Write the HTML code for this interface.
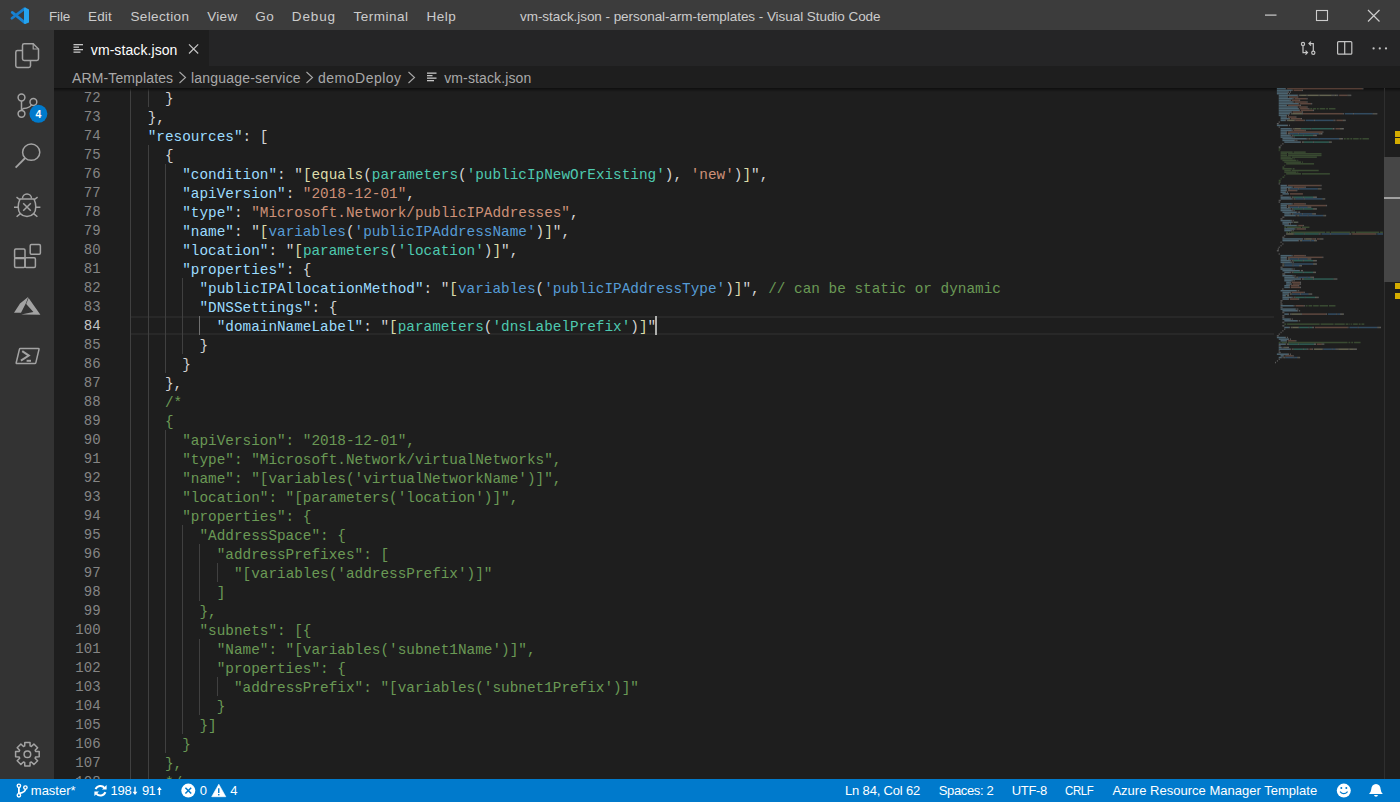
<!DOCTYPE html>
<html><head><meta charset="utf-8">
<style>
*{margin:0;padding:0;box-sizing:border-box}
html,body{width:1400px;height:802px;overflow:hidden;background:#1e1e1e;font-family:"Liberation Sans",sans-serif}
.abs{position:absolute}
#title{position:absolute;left:0;top:0;width:1400px;height:30px;background:#3c3c3c}
.mi{position:absolute;top:7px;font-size:13.5px;color:#cccccc;white-space:nowrap;line-height:16px}
#act{position:absolute;left:0;top:30px;width:54px;height:749px;background:#333333}
#tabs{position:absolute;left:54px;top:30px;width:1346px;height:36px;background:#252526}
#tab{position:absolute;left:0;top:0;width:155px;height:36px;background:#1e1e1e}
#crumbs{position:absolute;left:54px;top:66px;width:1346px;height:22px;background:#1e1e1e}
.bc{position:absolute;top:3px;font-size:14px;color:#a9a9a9;white-space:nowrap;line-height:16px}
#editor{position:absolute;left:54px;top:88px;width:1346px;height:691px;background:#1e1e1e;overflow:hidden}
#status{position:absolute;left:0;top:779px;width:1400px;height:23px;background:#007acc}
.st{position:absolute;top:4px;font-size:13px;color:#ffffff;white-space:nowrap;line-height:16px}
.ln{position:absolute;left:54px;width:47px;text-align:right;padding-right:0;height:19px;line-height:19px;font-family:"Liberation Mono",monospace;font-size:14px;letter-spacing:0.22px;color:#858585}
.ln.cur{color:#c6c6c6}
.ig{position:absolute;width:1px;height:19px;background:#404040}
.ig.ia{background:#707070}
.tx{position:absolute;white-space:pre;line-height:1;z-index:5}
.cl{position:absolute;height:19px;line-height:19px;font-family:"Liberation Mono",monospace;font-size:14.364px;white-space:pre}
#clip{position:absolute;left:0;top:88px;width:1400px;height:691px;overflow:hidden}
</style></head><body>
<!-- TITLE BAR -->
<div id="title">
  <svg class="abs" style="left:0;top:0" width="40" height="30" viewBox="0 0 40 30">
    <path d="M12.2 12.4 L24.8 22.6" stroke="#1883d3" stroke-width="2.7" stroke-linecap="round"/>
    <path d="M24.6 8.6 L11.9 18.3" stroke="#167dcc" stroke-width="2.7" stroke-linecap="round"/>
    <path d="M24 8.4 L25.2 7.5 L29 9.4 L29 22.4 L25.2 24.1 L24 23.2 Z" fill="#25a4ef"/>
  </svg>
  <svg class="abs" style="left:1250px;top:0" width="150" height="30" viewBox="1250 0 150 30">
    <rect x="1265" y="14.5" width="11.5" height="1.2" fill="#cccccc"/>
    <rect x="1316.5" y="10.5" width="11" height="10" fill="none" stroke="#cccccc" stroke-width="1.1"/>
    <path d="M1368 10 L1379.5 21.5 M1379.5 10 L1368 21.5" stroke="#cccccc" stroke-width="1.2"/>
  </svg>
</div>

<!-- ACTIVITY BAR -->
<div id="act"></div>
<svg class="abs" style="left:0;top:30px" width="54" height="749" viewBox="0 30 54 749">
  <g fill="none" stroke="#a3a3a3" stroke-width="1.5">
    <!-- files -->
    <path d="M22.5 50.5 H17.5 Q15.8 50.5 15.8 52.2 V65.8 Q15.8 67.5 17.5 67.5 H28.8 Q30.5 67.5 30.5 65.8 V61"/>
    <path d="M24.2 43.8 H33.2 L38.5 49 V58.8 Q38.5 60.5 36.8 60.5 H24.2 Q22.5 60.5 22.5 58.8 V45.5 Q22.5 43.8 24.2 43.8 Z"/>
    <path d="M33.2 43.8 V49 H38.5" stroke-width="1.2"/>
    <!-- scm -->
    <circle cx="21.5" cy="97.5" r="3.4"/>
    <circle cx="33.4" cy="102" r="3.4"/>
    <circle cx="21.5" cy="113.8" r="3.4"/>
    <path d="M21.5 101 V110.4"/>
    <path d="M31.5 104.8 Q30 108 23.5 108.5 L21.5 110"/>
    <!-- search -->
    <ellipse cx="31.2" cy="152.2" rx="8.6" ry="8.1"/>
    <path d="M25.2 158 L15.6 167.6" stroke-width="1.8"/>
    <!-- debug -->
    <path d="M22.5 198.5 A4.5 4.5 0 0 1 31.5 198.5"/>
    <path d="M20 199 Q18.2 203 18.2 206.8 Q18.2 216 27 216.6 Q35.8 216 35.8 206.8 Q35.8 203 34 199 Z"/>
    <path d="M23.2 203.2 L30.8 210.8 M30.8 203.2 L23.2 210.8"/>
    <path d="M14 207.2 H18.2 M35.8 207.2 H40.4 M16.5 197.2 L20.2 200 M37.6 197.2 L33.8 200 M16.6 216.8 L20.4 213.6 M37.4 216.8 L33.6 213.6"/>
    <!-- extensions -->
    <rect x="14.6" y="249" width="10.4" height="9.4" rx="1.2"/>
    <rect x="14.6" y="257.8" width="10.4" height="9.6" rx="1.2"/>
    <rect x="25" y="257.8" width="10.4" height="9.6" rx="1.2"/>
    <rect x="30.2" y="244.6" width="10.2" height="9.6" rx="1.2"/>
    <!-- powershell -->
    <path d="M20.4 348.6 H38.4 Q39.2 348.6 39 349.4 L35.8 362.8 Q35.6 363.6 34.8 363.6 H16.8 Q16 363.6 16.2 362.8 L19.4 349.4 Q19.6 348.6 20.4 348.6 Z" stroke-width="1.5"/>
    <path d="M22.2 351.2 L28.8 355.6 L20.9 360.6" stroke-width="2"/>
    <path d="M26.6 360.8 H31" stroke-width="2"/>
  </g>
  <!-- azure -->
  <path d="M14 312.7 L20 303.4 L28.4 296.7 L26 303 L21 312.7 Z M28.6 298 L40.4 314.7 L21.2 314.4 L33.4 312.1 L26.2 304 Z" fill="#a3a3a3"/>
  <!-- badge -->
  <circle cx="38.4" cy="113.8" r="9" fill="#007acc"/>
  <text x="38.4" y="117.6" font-family="Liberation Sans" font-weight="bold" font-size="10.5" fill="#fff" text-anchor="middle">4</text>
  <!-- gear -->
  <path fill="none" stroke="#a3a3a3" stroke-width="1.5" stroke-linejoin="round" d="M24.71 745.93 L24.78 742.39 L30.02 742.39 L30.09 745.93 L31.35 746.45 L33.90 743.99 L37.61 747.70 L35.15 750.25 L35.67 751.51 L39.21 751.58 L39.21 756.82 L35.67 756.89 L35.15 758.15 L37.61 760.70 L33.90 764.41 L31.35 761.95 L30.09 762.47 L30.02 766.01 L24.78 766.01 L24.71 762.47 L23.45 761.95 L20.90 764.41 L17.19 760.70 L19.65 758.15 L19.13 756.89 L15.59 756.82 L15.59 751.58 L19.13 751.51 L19.65 750.25 L17.19 747.70 L20.90 743.99 L23.45 746.45 Z"/>
  <circle cx="27.4" cy="754.2" r="3.3" fill="none" stroke="#a3a3a3" stroke-width="1.5"/>
</svg>

<!-- TABS -->
<div id="tabs">
  <div id="tab"></div>
  <svg class="abs" style="left:0;top:0" width="160" height="36">
    <g fill="#c5c5c5">
      <rect x="19.5" y="14" width="9.5" height="1.3"/>
      <rect x="19.5" y="16.5" width="5.5" height="1.3"/>
      <rect x="19.5" y="19" width="9.5" height="1.3"/>
      <rect x="19.5" y="21.5" width="7" height="1.3"/>
    </g>
    <path d="M135 14.3 L144.2 23.5 M144.2 14.3 L135 23.5" stroke="#c5c5c5" stroke-width="1.2"/>
  </svg>
  <svg class="abs" style="left:1230px;top:0" width="116" height="36" viewBox="1284 30 116 36">
    <g fill="none" stroke="#c5c5c5" stroke-width="1.2">
      <circle cx="1303" cy="43.9" r="1.6"/>
      <circle cx="1313.3" cy="52.7" r="1.6"/>
      <path d="M1303 45.5 V52.6 L1307.4 52.6 M1305.5 50.6 L1307.5 52.6 L1305.5 54.6"/>
      <path d="M1313.3 51.1 V43.6 L1309 43.6 M1311 41.6 L1309 43.6 L1311 45.6"/>
      <rect x="1337.6" y="41.6" width="14.2" height="12.6" rx="1"/>
      <path d="M1344.7 41.6 V54.2"/>
    </g>
    <g fill="#c5c5c5">
      <circle cx="1373.6" cy="48.4" r="1.1"/>
      <circle cx="1379.8" cy="48.4" r="1.1"/>
      <circle cx="1386" cy="48.4" r="1.1"/>
    </g>
  </svg>
</div>

<!-- BREADCRUMBS -->
<div id="crumbs">
  <svg class="abs" style="left:0;top:0" width="400" height="22" viewBox="54 66 400 22">
    <g fill="none" stroke="#a9a9a9" stroke-width="1.1">
      <path d="M179.5 72 L185.5 77.5 L179.5 83"/>
      <path d="M306.5 72 L312.5 77.5 L306.5 83"/>
      <path d="M408.5 72 L414.5 77.5 L408.5 83"/>
    </g>
    <g fill="#c5c5c5">
      <rect x="427" y="72.5" width="9.5" height="1.3"/>
      <rect x="427" y="75" width="5.5" height="1.3"/>
      <rect x="427" y="77.5" width="9.5" height="1.3"/>
      <rect x="427" y="80" width="7" height="1.3"/>
    </g>
  </svg>
</div>

<!-- EDITOR -->
<div id="editor"></div>
<div class="abs" style="left:131px;top:316px;width:1143px;height:19px;border:2px solid #282828;border-left:none;border-right:none"></div>
<div class="ln" style="top:88.5px">72</div>
<div class="ig" style="left:130px;top:88px"></div>
<div class="ig" style="left:148px;top:88px"></div>
<div class="cl" style="top:89.5px;left:164.98px"><span style="color:#d4d4d4">}</span></div>
<div class="ln" style="top:107.5px">73</div>
<div class="ig" style="left:130px;top:107px"></div>
<div class="cl" style="top:108.5px;left:147.74px"><span style="color:#d4d4d4">},</span></div>
<div class="ln" style="top:126.5px">74</div>
<div class="ig" style="left:130px;top:126px"></div>
<div class="cl" style="top:127.5px;left:147.74px"><span style="color:#9cdcfe">"resources"</span><span style="color:#d4d4d4">: </span><span style="color:#d4d4d4">[</span></div>
<div class="ln" style="top:145.5px">75</div>
<div class="ig" style="left:130px;top:145px"></div>
<div class="ig" style="left:148px;top:145px"></div>
<div class="cl" style="top:146.5px;left:164.98px"><span style="color:#d4d4d4">{</span></div>
<div class="ln" style="top:164.5px">76</div>
<div class="ig" style="left:130px;top:164px"></div>
<div class="ig" style="left:148px;top:164px"></div>
<div class="ig" style="left:165px;top:164px"></div>
<div class="cl" style="top:165.5px;left:182.22px"><span style="color:#9cdcfe">"condition"</span><span style="color:#d4d4d4">: </span><span style="color:#d4d4d4">"</span><span style="color:#dcdcaa">[</span><span style="color:#dcdcaa">equals</span><span style="color:#d4d4d4">(</span><span style="color:#4ec9b0">parameters</span><span style="color:#d4d4d4">(</span><span style="color:#4ec9b0">'publicIpNewOrExisting'</span><span style="color:#d4d4d4">), </span><span style="color:#ce9178">'new'</span><span style="color:#d4d4d4">)</span><span style="color:#dcdcaa">]</span><span style="color:#d4d4d4">",</span></div>
<div class="ln" style="top:183.5px">77</div>
<div class="ig" style="left:130px;top:183px"></div>
<div class="ig" style="left:148px;top:183px"></div>
<div class="ig" style="left:165px;top:183px"></div>
<div class="cl" style="top:184.5px;left:182.22px"><span style="color:#9cdcfe">"apiVersion"</span><span style="color:#d4d4d4">: </span><span style="color:#ce9178">"2018-12-01"</span><span style="color:#d4d4d4">,</span></div>
<div class="ln" style="top:202.5px">78</div>
<div class="ig" style="left:130px;top:202px"></div>
<div class="ig" style="left:148px;top:202px"></div>
<div class="ig" style="left:165px;top:202px"></div>
<div class="cl" style="top:203.5px;left:182.22px"><span style="color:#9cdcfe">"type"</span><span style="color:#d4d4d4">: </span><span style="color:#ce9178">"Microsoft.Network/publicIPAddresses"</span><span style="color:#d4d4d4">,</span></div>
<div class="ln" style="top:221.5px">79</div>
<div class="ig" style="left:130px;top:221px"></div>
<div class="ig" style="left:148px;top:221px"></div>
<div class="ig" style="left:165px;top:221px"></div>
<div class="cl" style="top:222.5px;left:182.22px"><span style="color:#9cdcfe">"name"</span><span style="color:#d4d4d4">: </span><span style="color:#d4d4d4">"</span><span style="color:#dcdcaa">[</span><span style="color:#569cd6">variables</span><span style="color:#d4d4d4">(</span><span style="color:#569cd6">'publicIPAddressName'</span><span style="color:#d4d4d4">)</span><span style="color:#dcdcaa">]</span><span style="color:#d4d4d4">",</span></div>
<div class="ln" style="top:240.5px">80</div>
<div class="ig" style="left:130px;top:240px"></div>
<div class="ig" style="left:148px;top:240px"></div>
<div class="ig" style="left:165px;top:240px"></div>
<div class="cl" style="top:241.5px;left:182.22px"><span style="color:#9cdcfe">"location"</span><span style="color:#d4d4d4">: </span><span style="color:#d4d4d4">"</span><span style="color:#dcdcaa">[</span><span style="color:#4ec9b0">parameters</span><span style="color:#d4d4d4">(</span><span style="color:#4ec9b0">'location'</span><span style="color:#d4d4d4">)</span><span style="color:#dcdcaa">]</span><span style="color:#d4d4d4">",</span></div>
<div class="ln" style="top:259.5px">81</div>
<div class="ig" style="left:130px;top:259px"></div>
<div class="ig" style="left:148px;top:259px"></div>
<div class="ig" style="left:165px;top:259px"></div>
<div class="cl" style="top:260.5px;left:182.22px"><span style="color:#9cdcfe">"properties"</span><span style="color:#d4d4d4">: </span><span style="color:#d4d4d4">{</span></div>
<div class="ln" style="top:278.5px">82</div>
<div class="ig" style="left:130px;top:278px"></div>
<div class="ig" style="left:148px;top:278px"></div>
<div class="ig" style="left:165px;top:278px"></div>
<div class="ig" style="left:182px;top:278px"></div>
<div class="cl" style="top:279.5px;left:199.46px"><span style="color:#9cdcfe">"publicIPAllocationMethod"</span><span style="color:#d4d4d4">: </span><span style="color:#d4d4d4">"</span><span style="color:#dcdcaa">[</span><span style="color:#569cd6">variables</span><span style="color:#d4d4d4">(</span><span style="color:#569cd6">'publicIPAddressType'</span><span style="color:#d4d4d4">)</span><span style="color:#dcdcaa">]</span><span style="color:#d4d4d4">",</span><span style="color:#6a9955"> // can be static or dynamic</span></div>
<div class="ln" style="top:297.5px">83</div>
<div class="ig" style="left:130px;top:297px"></div>
<div class="ig" style="left:148px;top:297px"></div>
<div class="ig" style="left:165px;top:297px"></div>
<div class="ig" style="left:182px;top:297px"></div>
<div class="cl" style="top:298.5px;left:199.46px"><span style="color:#9cdcfe">"DNSSettings"</span><span style="color:#d4d4d4">: </span><span style="color:#d4d4d4">{</span></div>
<div class="ln cur" style="top:316.5px">84</div>
<div class="ig" style="left:130px;top:316px"></div>
<div class="ig" style="left:148px;top:316px"></div>
<div class="ig" style="left:165px;top:316px"></div>
<div class="ig" style="left:182px;top:316px"></div>
<div class="ig ia" style="left:199px;top:316px"></div>
<div class="cl" style="top:317.5px;left:216.70px"><span style="color:#9cdcfe">"domainNameLabel"</span><span style="color:#d4d4d4">: </span><span style="color:#d4d4d4">"</span><span style="color:#dcdcaa">[</span><span style="color:#4ec9b0">parameters</span><span style="color:#d4d4d4">(</span><span style="color:#4ec9b0">'dnsLabelPrefix'</span><span style="color:#d4d4d4">)</span><span style="color:#dcdcaa">]</span><span style="color:#d4d4d4">"</span></div>
<div class="ln" style="top:335.5px">85</div>
<div class="ig" style="left:130px;top:335px"></div>
<div class="ig" style="left:148px;top:335px"></div>
<div class="ig" style="left:165px;top:335px"></div>
<div class="ig" style="left:182px;top:335px"></div>
<div class="cl" style="top:336.5px;left:199.46px"><span style="color:#d4d4d4">}</span></div>
<div class="ln" style="top:354.5px">86</div>
<div class="ig" style="left:130px;top:354px"></div>
<div class="ig" style="left:148px;top:354px"></div>
<div class="ig" style="left:165px;top:354px"></div>
<div class="cl" style="top:355.5px;left:182.22px"><span style="color:#d4d4d4">}</span></div>
<div class="ln" style="top:373.5px">87</div>
<div class="ig" style="left:130px;top:373px"></div>
<div class="ig" style="left:148px;top:373px"></div>
<div class="cl" style="top:374.5px;left:164.98px"><span style="color:#d4d4d4">},</span></div>
<div class="ln" style="top:392.5px">88</div>
<div class="ig" style="left:130px;top:392px"></div>
<div class="ig" style="left:148px;top:392px"></div>
<div class="cl" style="top:393.5px;left:164.98px"><span style="color:#6a9955">/*</span></div>
<div class="ln" style="top:411.5px">89</div>
<div class="ig" style="left:130px;top:411px"></div>
<div class="ig" style="left:148px;top:411px"></div>
<div class="cl" style="top:412.5px;left:164.98px"><span style="color:#6a9955">{</span></div>
<div class="ln" style="top:430.5px">90</div>
<div class="ig" style="left:130px;top:430px"></div>
<div class="ig" style="left:148px;top:430px"></div>
<div class="ig" style="left:165px;top:430px"></div>
<div class="cl" style="top:431.5px;left:182.22px"><span style="color:#6a9955">"apiVersion": "2018-12-01",</span></div>
<div class="ln" style="top:449.5px">91</div>
<div class="ig" style="left:130px;top:449px"></div>
<div class="ig" style="left:148px;top:449px"></div>
<div class="ig" style="left:165px;top:449px"></div>
<div class="cl" style="top:450.5px;left:182.22px"><span style="color:#6a9955">"type": "Microsoft.Network/virtualNetworks",</span></div>
<div class="ln" style="top:468.5px">92</div>
<div class="ig" style="left:130px;top:468px"></div>
<div class="ig" style="left:148px;top:468px"></div>
<div class="ig" style="left:165px;top:468px"></div>
<div class="cl" style="top:469.5px;left:182.22px"><span style="color:#6a9955">"name": "[variables('virtualNetworkName')]",</span></div>
<div class="ln" style="top:487.5px">93</div>
<div class="ig" style="left:130px;top:487px"></div>
<div class="ig" style="left:148px;top:487px"></div>
<div class="ig" style="left:165px;top:487px"></div>
<div class="cl" style="top:488.5px;left:182.22px"><span style="color:#6a9955">"location": "[parameters('location')]",</span></div>
<div class="ln" style="top:506.5px">94</div>
<div class="ig" style="left:130px;top:506px"></div>
<div class="ig" style="left:148px;top:506px"></div>
<div class="ig" style="left:165px;top:506px"></div>
<div class="cl" style="top:507.5px;left:182.22px"><span style="color:#6a9955">"properties": {</span></div>
<div class="ln" style="top:525.5px">95</div>
<div class="ig" style="left:130px;top:525px"></div>
<div class="ig" style="left:148px;top:525px"></div>
<div class="ig" style="left:165px;top:525px"></div>
<div class="ig" style="left:182px;top:525px"></div>
<div class="cl" style="top:526.5px;left:199.46px"><span style="color:#6a9955">"AddressSpace": {</span></div>
<div class="ln" style="top:544.5px">96</div>
<div class="ig" style="left:130px;top:544px"></div>
<div class="ig" style="left:148px;top:544px"></div>
<div class="ig" style="left:165px;top:544px"></div>
<div class="ig" style="left:182px;top:544px"></div>
<div class="ig" style="left:199px;top:544px"></div>
<div class="cl" style="top:545.5px;left:216.70px"><span style="color:#6a9955">"addressPrefixes": [</span></div>
<div class="ln" style="top:563.5px">97</div>
<div class="ig" style="left:130px;top:563px"></div>
<div class="ig" style="left:148px;top:563px"></div>
<div class="ig" style="left:165px;top:563px"></div>
<div class="ig" style="left:182px;top:563px"></div>
<div class="ig" style="left:199px;top:563px"></div>
<div class="ig" style="left:217px;top:563px"></div>
<div class="cl" style="top:564.5px;left:233.94px"><span style="color:#6a9955">"[variables('addressPrefix')]"</span></div>
<div class="ln" style="top:582.5px">98</div>
<div class="ig" style="left:130px;top:582px"></div>
<div class="ig" style="left:148px;top:582px"></div>
<div class="ig" style="left:165px;top:582px"></div>
<div class="ig" style="left:182px;top:582px"></div>
<div class="ig" style="left:199px;top:582px"></div>
<div class="cl" style="top:583.5px;left:216.70px"><span style="color:#6a9955">]</span></div>
<div class="ln" style="top:601.5px">99</div>
<div class="ig" style="left:130px;top:601px"></div>
<div class="ig" style="left:148px;top:601px"></div>
<div class="ig" style="left:165px;top:601px"></div>
<div class="ig" style="left:182px;top:601px"></div>
<div class="cl" style="top:602.5px;left:199.46px"><span style="color:#6a9955">},</span></div>
<div class="ln" style="top:620.5px">100</div>
<div class="ig" style="left:130px;top:620px"></div>
<div class="ig" style="left:148px;top:620px"></div>
<div class="ig" style="left:165px;top:620px"></div>
<div class="ig" style="left:182px;top:620px"></div>
<div class="cl" style="top:621.5px;left:199.46px"><span style="color:#6a9955">"subnets": [{</span></div>
<div class="ln" style="top:639.5px">101</div>
<div class="ig" style="left:130px;top:639px"></div>
<div class="ig" style="left:148px;top:639px"></div>
<div class="ig" style="left:165px;top:639px"></div>
<div class="ig" style="left:182px;top:639px"></div>
<div class="ig" style="left:199px;top:639px"></div>
<div class="cl" style="top:640.5px;left:216.70px"><span style="color:#6a9955">"Name": "[variables('subnet1Name')]",</span></div>
<div class="ln" style="top:658.5px">102</div>
<div class="ig" style="left:130px;top:658px"></div>
<div class="ig" style="left:148px;top:658px"></div>
<div class="ig" style="left:165px;top:658px"></div>
<div class="ig" style="left:182px;top:658px"></div>
<div class="ig" style="left:199px;top:658px"></div>
<div class="cl" style="top:659.5px;left:216.70px"><span style="color:#6a9955">"properties": {</span></div>
<div class="ln" style="top:677.5px">103</div>
<div class="ig" style="left:130px;top:677px"></div>
<div class="ig" style="left:148px;top:677px"></div>
<div class="ig" style="left:165px;top:677px"></div>
<div class="ig" style="left:182px;top:677px"></div>
<div class="ig" style="left:199px;top:677px"></div>
<div class="ig" style="left:217px;top:677px"></div>
<div class="cl" style="top:678.5px;left:233.94px"><span style="color:#6a9955">"addressPrefix": "[variables('subnet1Prefix')]"</span></div>
<div class="ln" style="top:696.5px">104</div>
<div class="ig" style="left:130px;top:696px"></div>
<div class="ig" style="left:148px;top:696px"></div>
<div class="ig" style="left:165px;top:696px"></div>
<div class="ig" style="left:182px;top:696px"></div>
<div class="ig" style="left:199px;top:696px"></div>
<div class="cl" style="top:697.5px;left:216.70px"><span style="color:#6a9955">}</span></div>
<div class="ln" style="top:715.5px">105</div>
<div class="ig" style="left:130px;top:715px"></div>
<div class="ig" style="left:148px;top:715px"></div>
<div class="ig" style="left:165px;top:715px"></div>
<div class="ig" style="left:182px;top:715px"></div>
<div class="cl" style="top:716.5px;left:199.46px"><span style="color:#6a9955">}]</span></div>
<div class="ln" style="top:734.5px">106</div>
<div class="ig" style="left:130px;top:734px"></div>
<div class="ig" style="left:148px;top:734px"></div>
<div class="ig" style="left:165px;top:734px"></div>
<div class="cl" style="top:735.5px;left:182.22px"><span style="color:#6a9955">}</span></div>
<div class="ln" style="top:753.5px">107</div>
<div class="ig" style="left:130px;top:753px"></div>
<div class="ig" style="left:148px;top:753px"></div>
<div class="cl" style="top:754.5px;left:164.98px"><span style="color:#6a9955">},</span></div>
<div class="ln" style="top:772.5px">108</div>
<div class="ig" style="left:130px;top:772px"></div>
<div class="ig" style="left:148px;top:772px"></div>
<div class="cl" style="top:773.5px;left:164.98px"><span style="color:#6a9955">*/</span></div>
<div style="position:absolute;left:655.1px;top:316px;width:2px;height:19px;background:#aeafad"></div>
<div class="abs" style="left:54px;top:88px;width:1346px;height:4px;background:linear-gradient(#0e0e0e,rgba(30,30,30,0))"></div>

<!-- MINIMAP / SCROLLBAR -->
<svg class="abs" style="left:1268px;top:88px" width="116" height="691" viewBox="1268 88 116 691"><g opacity="0.36"><rect x="1276.86" y="87.92" width="8.37" height="1.5" fill="#9cdcfe"/><rect x="1285.23" y="87.92" width="0.93" height="1.5" fill="#d4d4d4"/><rect x="1287.09" y="87.92" width="75.33" height="1.5" fill="#ce9178"/><rect x="1362.42" y="87.92" width="0.93" height="1.5" fill="#d4d4d4"/><rect x="1276.86" y="89.59" width="14.88" height="1.5" fill="#9cdcfe"/><rect x="1291.74" y="89.59" width="0.93" height="1.5" fill="#d4d4d4"/><rect x="1293.60" y="89.59" width="8.37" height="1.5" fill="#ce9178"/><rect x="1301.97" y="89.59" width="0.93" height="1.5" fill="#d4d4d4"/><rect x="1276.86" y="91.26" width="11.16" height="1.5" fill="#9cdcfe"/><rect x="1288.02" y="91.26" width="0.93" height="1.5" fill="#d4d4d4"/><rect x="1289.88" y="91.26" width="0.93" height="1.5" fill="#d4d4d4"/><rect x="1276.86" y="92.93" width="10.23" height="1.5" fill="#9cdcfe"/><rect x="1287.09" y="92.93" width="0.93" height="1.5" fill="#d4d4d4"/><rect x="1288.95" y="92.93" width="0.93" height="1.5" fill="#d4d4d4"/><rect x="1278.72" y="94.60" width="18.60" height="1.5" fill="#9cdcfe"/><rect x="1297.32" y="94.60" width="0.93" height="1.5" fill="#d4d4d4"/><rect x="1299.18" y="94.60" width="0.93" height="1.5" fill="#d4d4d4"/><rect x="1300.11" y="94.60" width="0.93" height="1.5" fill="#dcdcaa"/><rect x="1301.04" y="94.60" width="5.58" height="1.5" fill="#dcdcaa"/><rect x="1306.62" y="94.60" width="0.93" height="1.5" fill="#d4d4d4"/><rect x="1307.55" y="94.60" width="11.16" height="1.5" fill="#dcdcaa"/><rect x="1318.71" y="94.60" width="0.93" height="1.5" fill="#d4d4d4"/><rect x="1319.64" y="94.60" width="12.09" height="1.5" fill="#dcdcaa"/><rect x="1331.73" y="94.60" width="0.93" height="1.5" fill="#d4d4d4"/><rect x="1332.66" y="94.60" width="0.93" height="1.5" fill="#d4d4d4"/><rect x="1333.59" y="94.60" width="0.93" height="1.5" fill="#d4d4d4"/><rect x="1334.52" y="94.60" width="1.86" height="1.5" fill="#dcdcaa"/><rect x="1336.38" y="94.60" width="0.93" height="1.5" fill="#d4d4d4"/><rect x="1337.31" y="94.60" width="0.93" height="1.5" fill="#d4d4d4"/><rect x="1339.17" y="94.60" width="8.37" height="1.5" fill="#ce9178"/><rect x="1347.54" y="94.60" width="0.93" height="1.5" fill="#d4d4d4"/><rect x="1348.47" y="94.60" width="0.93" height="1.5" fill="#dcdcaa"/><rect x="1349.40" y="94.60" width="0.93" height="1.5" fill="#d4d4d4"/><rect x="1350.33" y="94.60" width="0.93" height="1.5" fill="#d4d4d4"/><rect x="1278.72" y="96.27" width="8.37" height="1.5" fill="#9cdcfe"/><rect x="1287.09" y="96.27" width="0.93" height="1.5" fill="#d4d4d4"/><rect x="1288.95" y="96.27" width="8.37" height="1.5" fill="#ce9178"/><rect x="1297.32" y="96.27" width="0.93" height="1.5" fill="#d4d4d4"/><rect x="1278.72" y="97.94" width="13.95" height="1.5" fill="#9cdcfe"/><rect x="1292.67" y="97.94" width="0.93" height="1.5" fill="#d4d4d4"/><rect x="1294.53" y="97.94" width="12.09" height="1.5" fill="#ce9178"/><rect x="1306.62" y="97.94" width="0.93" height="1.5" fill="#d4d4d4"/><rect x="1278.72" y="99.61" width="11.16" height="1.5" fill="#9cdcfe"/><rect x="1289.88" y="99.61" width="0.93" height="1.5" fill="#d4d4d4"/><rect x="1291.74" y="99.61" width="7.44" height="1.5" fill="#ce9178"/><rect x="1299.18" y="99.61" width="0.93" height="1.5" fill="#d4d4d4"/><rect x="1278.72" y="101.28" width="13.95" height="1.5" fill="#9cdcfe"/><rect x="1292.67" y="101.28" width="0.93" height="1.5" fill="#d4d4d4"/><rect x="1294.53" y="101.28" width="12.09" height="1.5" fill="#ce9178"/><rect x="1306.62" y="101.28" width="0.93" height="1.5" fill="#d4d4d4"/><rect x="1278.72" y="102.95" width="19.53" height="1.5" fill="#9cdcfe"/><rect x="1298.25" y="102.95" width="0.93" height="1.5" fill="#d4d4d4"/><rect x="1300.11" y="102.95" width="11.16" height="1.5" fill="#ce9178"/><rect x="1311.27" y="102.95" width="0.93" height="1.5" fill="#d4d4d4"/><rect x="1278.72" y="104.62" width="7.44" height="1.5" fill="#9cdcfe"/><rect x="1286.16" y="104.62" width="0.93" height="1.5" fill="#d4d4d4"/><rect x="1288.02" y="104.62" width="12.09" height="1.5" fill="#ce9178"/><rect x="1300.11" y="104.62" width="0.93" height="1.5" fill="#d4d4d4"/><rect x="1278.72" y="106.29" width="18.60" height="1.5" fill="#9cdcfe"/><rect x="1297.32" y="106.29" width="0.93" height="1.5" fill="#d4d4d4"/><rect x="1299.18" y="106.29" width="7.44" height="1.5" fill="#ce9178"/><rect x="1306.62" y="106.29" width="0.93" height="1.5" fill="#d4d4d4"/><rect x="1278.72" y="107.96" width="19.53" height="1.5" fill="#9cdcfe"/><rect x="1298.25" y="107.96" width="0.93" height="1.5" fill="#d4d4d4"/><rect x="1300.11" y="107.96" width="8.37" height="1.5" fill="#ce9178"/><rect x="1308.48" y="107.96" width="0.93" height="1.5" fill="#d4d4d4"/><rect x="1310.34" y="107.96" width="1.86" height="1.5" fill="#6a9955"/><rect x="1313.13" y="107.96" width="2.79" height="1.5" fill="#6a9955"/><rect x="1316.85" y="107.96" width="1.86" height="1.5" fill="#6a9955"/><rect x="1319.64" y="107.96" width="5.58" height="1.5" fill="#6a9955"/><rect x="1326.15" y="107.96" width="1.86" height="1.5" fill="#6a9955"/><rect x="1328.94" y="107.96" width="6.51" height="1.5" fill="#6a9955"/><rect x="1278.72" y="109.63" width="20.46" height="1.5" fill="#9cdcfe"/><rect x="1299.18" y="109.63" width="0.93" height="1.5" fill="#d4d4d4"/><rect x="1301.04" y="109.63" width="12.09" height="1.5" fill="#ce9178"/><rect x="1313.13" y="109.63" width="0.93" height="1.5" fill="#d4d4d4"/><rect x="1278.72" y="111.30" width="12.09" height="1.5" fill="#9cdcfe"/><rect x="1290.81" y="111.30" width="0.93" height="1.5" fill="#d4d4d4"/><rect x="1292.67" y="111.30" width="9.30" height="1.5" fill="#ce9178"/><rect x="1301.97" y="111.30" width="0.93" height="1.5" fill="#d4d4d4"/><rect x="1278.72" y="112.97" width="10.23" height="1.5" fill="#9cdcfe"/><rect x="1288.95" y="112.97" width="0.93" height="1.5" fill="#d4d4d4"/><rect x="1290.81" y="112.97" width="0.93" height="1.5" fill="#d4d4d4"/><rect x="1291.74" y="112.97" width="0.93" height="1.5" fill="#dcdcaa"/><rect x="1292.67" y="112.97" width="9.30" height="1.5" fill="#dcdcaa"/><rect x="1301.97" y="112.97" width="0.93" height="1.5" fill="#d4d4d4"/><rect x="1302.90" y="112.97" width="39.99" height="1.5" fill="#ce9178"/><rect x="1342.89" y="112.97" width="0.93" height="1.5" fill="#d4d4d4"/><rect x="1344.75" y="112.97" width="8.37" height="1.5" fill="#569cd6"/><rect x="1353.12" y="112.97" width="0.93" height="1.5" fill="#d4d4d4"/><rect x="1354.05" y="112.97" width="18.60" height="1.5" fill="#569cd6"/><rect x="1372.65" y="112.97" width="0.93" height="1.5" fill="#d4d4d4"/><rect x="1373.58" y="112.97" width="0.93" height="1.5" fill="#d4d4d4"/><rect x="1374.51" y="112.97" width="0.93" height="1.5" fill="#dcdcaa"/><rect x="1375.44" y="112.97" width="0.93" height="1.5" fill="#d4d4d4"/><rect x="1376.37" y="112.97" width="0.93" height="1.5" fill="#d4d4d4"/><rect x="1278.72" y="114.64" width="7.44" height="1.5" fill="#9cdcfe"/><rect x="1286.16" y="114.64" width="0.93" height="1.5" fill="#d4d4d4"/><rect x="1288.02" y="114.64" width="0.93" height="1.5" fill="#d4d4d4"/><rect x="1280.58" y="116.31" width="5.58" height="1.5" fill="#9cdcfe"/><rect x="1286.16" y="116.31" width="0.93" height="1.5" fill="#d4d4d4"/><rect x="1288.02" y="116.31" width="7.44" height="1.5" fill="#ce9178"/><rect x="1295.46" y="116.31" width="0.93" height="1.5" fill="#d4d4d4"/><rect x="1280.58" y="117.98" width="8.37" height="1.5" fill="#9cdcfe"/><rect x="1288.95" y="117.98" width="0.93" height="1.5" fill="#d4d4d4"/><rect x="1290.81" y="117.98" width="10.23" height="1.5" fill="#ce9178"/><rect x="1301.04" y="117.98" width="0.93" height="1.5" fill="#d4d4d4"/><rect x="1280.58" y="119.65" width="4.65" height="1.5" fill="#9cdcfe"/><rect x="1285.23" y="119.65" width="0.93" height="1.5" fill="#d4d4d4"/><rect x="1287.09" y="119.65" width="0.93" height="1.5" fill="#d4d4d4"/><rect x="1288.02" y="119.65" width="0.93" height="1.5" fill="#dcdcaa"/><rect x="1288.95" y="119.65" width="5.58" height="1.5" fill="#dcdcaa"/><rect x="1294.53" y="119.65" width="0.93" height="1.5" fill="#d4d4d4"/><rect x="1295.46" y="119.65" width="8.37" height="1.5" fill="#ce9178"/><rect x="1303.83" y="119.65" width="0.93" height="1.5" fill="#d4d4d4"/><rect x="1305.69" y="119.65" width="8.37" height="1.5" fill="#569cd6"/><rect x="1314.06" y="119.65" width="0.93" height="1.5" fill="#d4d4d4"/><rect x="1314.99" y="119.65" width="18.60" height="1.5" fill="#569cd6"/><rect x="1333.59" y="119.65" width="0.93" height="1.5" fill="#d4d4d4"/><rect x="1334.52" y="119.65" width="0.93" height="1.5" fill="#d4d4d4"/><rect x="1336.38" y="119.65" width="6.51" height="1.5" fill="#ce9178"/><rect x="1342.89" y="119.65" width="0.93" height="1.5" fill="#d4d4d4"/><rect x="1343.82" y="119.65" width="0.93" height="1.5" fill="#dcdcaa"/><rect x="1344.75" y="119.65" width="0.93" height="1.5" fill="#d4d4d4"/><rect x="1278.72" y="121.32" width="0.93" height="1.5" fill="#d4d4d4"/><rect x="1276.86" y="122.99" width="1.86" height="1.5" fill="#d4d4d4"/><rect x="1276.86" y="124.66" width="10.23" height="1.5" fill="#9cdcfe"/><rect x="1287.09" y="124.66" width="0.93" height="1.5" fill="#d4d4d4"/><rect x="1288.95" y="124.66" width="0.93" height="1.5" fill="#d4d4d4"/><rect x="1278.72" y="126.33" width="0.93" height="1.5" fill="#d4d4d4"/><rect x="1280.58" y="128.00" width="10.23" height="1.5" fill="#9cdcfe"/><rect x="1290.81" y="128.00" width="0.93" height="1.5" fill="#d4d4d4"/><rect x="1292.67" y="128.00" width="0.93" height="1.5" fill="#d4d4d4"/><rect x="1293.60" y="128.00" width="0.93" height="1.5" fill="#dcdcaa"/><rect x="1294.53" y="128.00" width="5.58" height="1.5" fill="#dcdcaa"/><rect x="1300.11" y="128.00" width="0.93" height="1.5" fill="#d4d4d4"/><rect x="1301.04" y="128.00" width="9.30" height="1.5" fill="#4ec9b0"/><rect x="1310.34" y="128.00" width="0.93" height="1.5" fill="#d4d4d4"/><rect x="1311.27" y="128.00" width="21.39" height="1.5" fill="#4ec9b0"/><rect x="1332.66" y="128.00" width="1.86" height="1.5" fill="#d4d4d4"/><rect x="1335.45" y="128.00" width="4.65" height="1.5" fill="#ce9178"/><rect x="1340.10" y="128.00" width="0.93" height="1.5" fill="#d4d4d4"/><rect x="1341.03" y="128.00" width="0.93" height="1.5" fill="#dcdcaa"/><rect x="1341.96" y="128.00" width="1.86" height="1.5" fill="#d4d4d4"/><rect x="1280.58" y="129.67" width="11.16" height="1.5" fill="#9cdcfe"/><rect x="1291.74" y="129.67" width="0.93" height="1.5" fill="#d4d4d4"/><rect x="1293.60" y="129.67" width="11.16" height="1.5" fill="#ce9178"/><rect x="1304.76" y="129.67" width="0.93" height="1.5" fill="#d4d4d4"/><rect x="1280.58" y="131.34" width="5.58" height="1.5" fill="#9cdcfe"/><rect x="1286.16" y="131.34" width="0.93" height="1.5" fill="#d4d4d4"/><rect x="1288.02" y="131.34" width="34.41" height="1.5" fill="#ce9178"/><rect x="1322.43" y="131.34" width="0.93" height="1.5" fill="#d4d4d4"/><rect x="1280.58" y="133.01" width="5.58" height="1.5" fill="#9cdcfe"/><rect x="1286.16" y="133.01" width="0.93" height="1.5" fill="#d4d4d4"/><rect x="1288.02" y="133.01" width="0.93" height="1.5" fill="#d4d4d4"/><rect x="1288.95" y="133.01" width="0.93" height="1.5" fill="#dcdcaa"/><rect x="1289.88" y="133.01" width="8.37" height="1.5" fill="#569cd6"/><rect x="1298.25" y="133.01" width="0.93" height="1.5" fill="#d4d4d4"/><rect x="1299.18" y="133.01" width="19.53" height="1.5" fill="#569cd6"/><rect x="1318.71" y="133.01" width="0.93" height="1.5" fill="#d4d4d4"/><rect x="1319.64" y="133.01" width="0.93" height="1.5" fill="#dcdcaa"/><rect x="1320.57" y="133.01" width="1.86" height="1.5" fill="#d4d4d4"/><rect x="1280.58" y="134.68" width="9.30" height="1.5" fill="#9cdcfe"/><rect x="1289.88" y="134.68" width="0.93" height="1.5" fill="#d4d4d4"/><rect x="1291.74" y="134.68" width="0.93" height="1.5" fill="#d4d4d4"/><rect x="1292.67" y="134.68" width="0.93" height="1.5" fill="#dcdcaa"/><rect x="1293.60" y="134.68" width="9.30" height="1.5" fill="#4ec9b0"/><rect x="1302.90" y="134.68" width="0.93" height="1.5" fill="#d4d4d4"/><rect x="1303.83" y="134.68" width="9.30" height="1.5" fill="#4ec9b0"/><rect x="1313.13" y="134.68" width="0.93" height="1.5" fill="#d4d4d4"/><rect x="1314.06" y="134.68" width="0.93" height="1.5" fill="#dcdcaa"/><rect x="1314.99" y="134.68" width="1.86" height="1.5" fill="#d4d4d4"/><rect x="1280.58" y="136.35" width="11.16" height="1.5" fill="#9cdcfe"/><rect x="1291.74" y="136.35" width="0.93" height="1.5" fill="#d4d4d4"/><rect x="1293.60" y="136.35" width="0.93" height="1.5" fill="#d4d4d4"/><rect x="1282.44" y="138.02" width="24.18" height="1.5" fill="#9cdcfe"/><rect x="1306.62" y="138.02" width="0.93" height="1.5" fill="#d4d4d4"/><rect x="1308.48" y="138.02" width="0.93" height="1.5" fill="#d4d4d4"/><rect x="1309.41" y="138.02" width="0.93" height="1.5" fill="#dcdcaa"/><rect x="1310.34" y="138.02" width="8.37" height="1.5" fill="#569cd6"/><rect x="1318.71" y="138.02" width="0.93" height="1.5" fill="#d4d4d4"/><rect x="1319.64" y="138.02" width="19.53" height="1.5" fill="#569cd6"/><rect x="1339.17" y="138.02" width="0.93" height="1.5" fill="#d4d4d4"/><rect x="1340.10" y="138.02" width="0.93" height="1.5" fill="#dcdcaa"/><rect x="1341.03" y="138.02" width="1.86" height="1.5" fill="#d4d4d4"/><rect x="1343.82" y="138.02" width="1.86" height="1.5" fill="#6a9955"/><rect x="1346.61" y="138.02" width="2.79" height="1.5" fill="#6a9955"/><rect x="1350.33" y="138.02" width="1.86" height="1.5" fill="#6a9955"/><rect x="1353.12" y="138.02" width="5.58" height="1.5" fill="#6a9955"/><rect x="1359.63" y="138.02" width="1.86" height="1.5" fill="#6a9955"/><rect x="1362.42" y="138.02" width="6.51" height="1.5" fill="#6a9955"/><rect x="1282.44" y="139.69" width="12.09" height="1.5" fill="#9cdcfe"/><rect x="1294.53" y="139.69" width="0.93" height="1.5" fill="#d4d4d4"/><rect x="1296.39" y="139.69" width="0.93" height="1.5" fill="#d4d4d4"/><rect x="1284.30" y="141.36" width="15.81" height="1.5" fill="#9cdcfe"/><rect x="1300.11" y="141.36" width="0.93" height="1.5" fill="#d4d4d4"/><rect x="1301.97" y="141.36" width="0.93" height="1.5" fill="#d4d4d4"/><rect x="1302.90" y="141.36" width="0.93" height="1.5" fill="#dcdcaa"/><rect x="1303.83" y="141.36" width="9.30" height="1.5" fill="#4ec9b0"/><rect x="1313.13" y="141.36" width="0.93" height="1.5" fill="#d4d4d4"/><rect x="1314.06" y="141.36" width="14.88" height="1.5" fill="#4ec9b0"/><rect x="1328.94" y="141.36" width="0.93" height="1.5" fill="#d4d4d4"/><rect x="1329.87" y="141.36" width="0.93" height="1.5" fill="#dcdcaa"/><rect x="1330.80" y="141.36" width="0.93" height="1.5" fill="#d4d4d4"/><rect x="1282.44" y="143.03" width="0.93" height="1.5" fill="#d4d4d4"/><rect x="1280.58" y="144.70" width="0.93" height="1.5" fill="#d4d4d4"/><rect x="1278.72" y="146.37" width="1.86" height="1.5" fill="#d4d4d4"/><rect x="1278.72" y="148.04" width="1.86" height="1.5" fill="#6a9955"/><rect x="1278.72" y="149.71" width="0.93" height="1.5" fill="#6a9955"/><rect x="1280.58" y="151.38" width="12.09" height="1.5" fill="#6a9955"/><rect x="1293.60" y="151.38" width="12.09" height="1.5" fill="#6a9955"/><rect x="1280.58" y="153.05" width="6.51" height="1.5" fill="#6a9955"/><rect x="1288.02" y="153.05" width="33.48" height="1.5" fill="#6a9955"/><rect x="1280.58" y="154.72" width="6.51" height="1.5" fill="#6a9955"/><rect x="1288.02" y="154.72" width="33.48" height="1.5" fill="#6a9955"/><rect x="1280.58" y="156.39" width="10.23" height="1.5" fill="#6a9955"/><rect x="1291.74" y="156.39" width="25.11" height="1.5" fill="#6a9955"/><rect x="1280.58" y="158.06" width="12.09" height="1.5" fill="#6a9955"/><rect x="1293.60" y="158.06" width="0.93" height="1.5" fill="#6a9955"/><rect x="1282.44" y="159.73" width="13.95" height="1.5" fill="#6a9955"/><rect x="1297.32" y="159.73" width="0.93" height="1.5" fill="#6a9955"/><rect x="1284.30" y="161.40" width="16.74" height="1.5" fill="#6a9955"/><rect x="1301.97" y="161.40" width="0.93" height="1.5" fill="#6a9955"/><rect x="1286.16" y="163.07" width="27.90" height="1.5" fill="#6a9955"/><rect x="1284.30" y="164.74" width="0.93" height="1.5" fill="#6a9955"/><rect x="1282.44" y="166.41" width="1.86" height="1.5" fill="#6a9955"/><rect x="1282.44" y="168.08" width="9.30" height="1.5" fill="#6a9955"/><rect x="1292.67" y="168.08" width="1.86" height="1.5" fill="#6a9955"/><rect x="1284.30" y="169.75" width="6.51" height="1.5" fill="#6a9955"/><rect x="1291.74" y="169.75" width="26.97" height="1.5" fill="#6a9955"/><rect x="1284.30" y="171.42" width="12.09" height="1.5" fill="#6a9955"/><rect x="1297.32" y="171.42" width="0.93" height="1.5" fill="#6a9955"/><rect x="1286.16" y="173.09" width="14.88" height="1.5" fill="#6a9955"/><rect x="1301.97" y="173.09" width="27.90" height="1.5" fill="#6a9955"/><rect x="1284.30" y="174.76" width="0.93" height="1.5" fill="#6a9955"/><rect x="1282.44" y="176.43" width="1.86" height="1.5" fill="#6a9955"/><rect x="1280.58" y="178.10" width="0.93" height="1.5" fill="#6a9955"/><rect x="1278.72" y="179.77" width="1.86" height="1.5" fill="#6a9955"/><rect x="1278.72" y="181.44" width="1.86" height="1.5" fill="#6a9955"/><rect x="1278.72" y="183.11" width="0.93" height="1.5" fill="#d4d4d4"/><rect x="1280.58" y="184.78" width="5.58" height="1.5" fill="#9cdcfe"/><rect x="1286.16" y="184.78" width="0.93" height="1.5" fill="#d4d4d4"/><rect x="1288.02" y="184.78" width="32.55" height="1.5" fill="#ce9178"/><rect x="1320.57" y="184.78" width="0.93" height="1.5" fill="#d4d4d4"/><rect x="1280.58" y="186.45" width="11.16" height="1.5" fill="#9cdcfe"/><rect x="1291.74" y="186.45" width="0.93" height="1.5" fill="#d4d4d4"/><rect x="1293.60" y="186.45" width="11.16" height="1.5" fill="#ce9178"/><rect x="1304.76" y="186.45" width="0.93" height="1.5" fill="#d4d4d4"/><rect x="1280.58" y="188.12" width="5.58" height="1.5" fill="#9cdcfe"/><rect x="1286.16" y="188.12" width="0.93" height="1.5" fill="#d4d4d4"/><rect x="1288.02" y="188.12" width="0.93" height="1.5" fill="#d4d4d4"/><rect x="1288.95" y="188.12" width="0.93" height="1.5" fill="#dcdcaa"/><rect x="1289.88" y="188.12" width="8.37" height="1.5" fill="#569cd6"/><rect x="1298.25" y="188.12" width="0.93" height="1.5" fill="#d4d4d4"/><rect x="1299.18" y="188.12" width="18.60" height="1.5" fill="#569cd6"/><rect x="1317.78" y="188.12" width="0.93" height="1.5" fill="#d4d4d4"/><rect x="1318.71" y="188.12" width="0.93" height="1.5" fill="#dcdcaa"/><rect x="1319.64" y="188.12" width="0.93" height="1.5" fill="#d4d4d4"/><rect x="1320.57" y="188.12" width="0.93" height="1.5" fill="#d4d4d4"/><rect x="1280.58" y="189.79" width="5.58" height="1.5" fill="#9cdcfe"/><rect x="1286.16" y="189.79" width="0.93" height="1.5" fill="#d4d4d4"/><rect x="1288.02" y="189.79" width="8.37" height="1.5" fill="#ce9178"/><rect x="1296.39" y="189.79" width="0.93" height="1.5" fill="#d4d4d4"/><rect x="1280.58" y="191.46" width="4.65" height="1.5" fill="#9cdcfe"/><rect x="1285.23" y="191.46" width="0.93" height="1.5" fill="#d4d4d4"/><rect x="1287.09" y="191.46" width="0.93" height="1.5" fill="#d4d4d4"/><rect x="1282.44" y="193.13" width="5.58" height="1.5" fill="#9cdcfe"/><rect x="1288.02" y="193.13" width="0.93" height="1.5" fill="#d4d4d4"/><rect x="1289.88" y="193.13" width="13.02" height="1.5" fill="#ce9178"/><rect x="1280.58" y="194.80" width="0.93" height="1.5" fill="#d4d4d4"/><rect x="1281.51" y="194.80" width="0.93" height="1.5" fill="#d4d4d4"/><rect x="1280.58" y="196.47" width="9.30" height="1.5" fill="#9cdcfe"/><rect x="1289.88" y="196.47" width="0.93" height="1.5" fill="#d4d4d4"/><rect x="1291.74" y="196.47" width="0.93" height="1.5" fill="#d4d4d4"/><rect x="1292.67" y="196.47" width="0.93" height="1.5" fill="#dcdcaa"/><rect x="1293.60" y="196.47" width="9.30" height="1.5" fill="#4ec9b0"/><rect x="1302.90" y="196.47" width="0.93" height="1.5" fill="#d4d4d4"/><rect x="1303.83" y="196.47" width="9.30" height="1.5" fill="#4ec9b0"/><rect x="1313.13" y="196.47" width="0.93" height="1.5" fill="#d4d4d4"/><rect x="1314.06" y="196.47" width="0.93" height="1.5" fill="#dcdcaa"/><rect x="1314.99" y="196.47" width="0.93" height="1.5" fill="#d4d4d4"/><rect x="1315.92" y="196.47" width="0.93" height="1.5" fill="#d4d4d4"/><rect x="1280.58" y="198.14" width="11.16" height="1.5" fill="#9cdcfe"/><rect x="1291.74" y="198.14" width="0.93" height="1.5" fill="#d4d4d4"/><rect x="1293.60" y="198.14" width="0.93" height="1.5" fill="#d4d4d4"/><rect x="1294.53" y="198.14" width="0.93" height="1.5" fill="#dcdcaa"/><rect x="1295.46" y="198.14" width="8.37" height="1.5" fill="#569cd6"/><rect x="1303.83" y="198.14" width="0.93" height="1.5" fill="#d4d4d4"/><rect x="1304.76" y="198.14" width="17.67" height="1.5" fill="#569cd6"/><rect x="1322.43" y="198.14" width="0.93" height="1.5" fill="#d4d4d4"/><rect x="1323.36" y="198.14" width="0.93" height="1.5" fill="#dcdcaa"/><rect x="1324.29" y="198.14" width="0.93" height="1.5" fill="#d4d4d4"/><rect x="1278.72" y="199.81" width="0.93" height="1.5" fill="#d4d4d4"/><rect x="1279.65" y="199.81" width="0.93" height="1.5" fill="#d4d4d4"/><rect x="1278.72" y="201.48" width="0.93" height="1.5" fill="#d4d4d4"/><rect x="1280.58" y="203.15" width="11.16" height="1.5" fill="#9cdcfe"/><rect x="1291.74" y="203.15" width="0.93" height="1.5" fill="#d4d4d4"/><rect x="1293.60" y="203.15" width="11.16" height="1.5" fill="#ce9178"/><rect x="1304.76" y="203.15" width="0.93" height="1.5" fill="#d4d4d4"/><rect x="1280.58" y="204.82" width="5.58" height="1.5" fill="#9cdcfe"/><rect x="1286.16" y="204.82" width="0.93" height="1.5" fill="#d4d4d4"/><rect x="1288.02" y="204.82" width="38.13" height="1.5" fill="#ce9178"/><rect x="1326.15" y="204.82" width="0.93" height="1.5" fill="#d4d4d4"/><rect x="1280.58" y="206.49" width="5.58" height="1.5" fill="#9cdcfe"/><rect x="1286.16" y="206.49" width="0.93" height="1.5" fill="#d4d4d4"/><rect x="1288.02" y="206.49" width="0.93" height="1.5" fill="#d4d4d4"/><rect x="1288.95" y="206.49" width="0.93" height="1.5" fill="#dcdcaa"/><rect x="1289.88" y="206.49" width="8.37" height="1.5" fill="#569cd6"/><rect x="1298.25" y="206.49" width="0.93" height="1.5" fill="#d4d4d4"/><rect x="1299.18" y="206.49" width="8.37" height="1.5" fill="#569cd6"/><rect x="1307.55" y="206.49" width="0.93" height="1.5" fill="#d4d4d4"/><rect x="1308.48" y="206.49" width="0.93" height="1.5" fill="#dcdcaa"/><rect x="1309.41" y="206.49" width="0.93" height="1.5" fill="#d4d4d4"/><rect x="1310.34" y="206.49" width="0.93" height="1.5" fill="#d4d4d4"/><rect x="1280.58" y="208.16" width="9.30" height="1.5" fill="#9cdcfe"/><rect x="1289.88" y="208.16" width="0.93" height="1.5" fill="#d4d4d4"/><rect x="1291.74" y="208.16" width="0.93" height="1.5" fill="#d4d4d4"/><rect x="1292.67" y="208.16" width="0.93" height="1.5" fill="#dcdcaa"/><rect x="1293.60" y="208.16" width="9.30" height="1.5" fill="#4ec9b0"/><rect x="1302.90" y="208.16" width="0.93" height="1.5" fill="#d4d4d4"/><rect x="1303.83" y="208.16" width="9.30" height="1.5" fill="#4ec9b0"/><rect x="1313.13" y="208.16" width="0.93" height="1.5" fill="#d4d4d4"/><rect x="1314.06" y="208.16" width="0.93" height="1.5" fill="#dcdcaa"/><rect x="1314.99" y="208.16" width="0.93" height="1.5" fill="#d4d4d4"/><rect x="1315.92" y="208.16" width="0.93" height="1.5" fill="#d4d4d4"/><rect x="1280.58" y="209.83" width="11.16" height="1.5" fill="#9cdcfe"/><rect x="1291.74" y="209.83" width="0.93" height="1.5" fill="#d4d4d4"/><rect x="1293.60" y="209.83" width="0.93" height="1.5" fill="#d4d4d4"/><rect x="1282.44" y="211.50" width="13.95" height="1.5" fill="#9cdcfe"/><rect x="1296.39" y="211.50" width="0.93" height="1.5" fill="#d4d4d4"/><rect x="1298.25" y="211.50" width="0.93" height="1.5" fill="#d4d4d4"/><rect x="1299.18" y="211.50" width="0.93" height="1.5" fill="#d4d4d4"/><rect x="1284.30" y="213.17" width="5.58" height="1.5" fill="#9cdcfe"/><rect x="1289.88" y="213.17" width="0.93" height="1.5" fill="#d4d4d4"/><rect x="1291.74" y="213.17" width="0.93" height="1.5" fill="#d4d4d4"/><rect x="1292.67" y="213.17" width="0.93" height="1.5" fill="#dcdcaa"/><rect x="1293.60" y="213.17" width="8.37" height="1.5" fill="#569cd6"/><rect x="1301.97" y="213.17" width="0.93" height="1.5" fill="#d4d4d4"/><rect x="1302.90" y="213.17" width="9.30" height="1.5" fill="#569cd6"/><rect x="1312.20" y="213.17" width="0.93" height="1.5" fill="#d4d4d4"/><rect x="1313.13" y="213.17" width="0.93" height="1.5" fill="#dcdcaa"/><rect x="1314.06" y="213.17" width="0.93" height="1.5" fill="#d4d4d4"/><rect x="1314.99" y="213.17" width="0.93" height="1.5" fill="#d4d4d4"/><rect x="1284.30" y="214.84" width="11.16" height="1.5" fill="#9cdcfe"/><rect x="1295.46" y="214.84" width="0.93" height="1.5" fill="#d4d4d4"/><rect x="1297.32" y="214.84" width="0.93" height="1.5" fill="#d4d4d4"/><rect x="1298.25" y="214.84" width="0.93" height="1.5" fill="#dcdcaa"/><rect x="1299.18" y="214.84" width="8.37" height="1.5" fill="#569cd6"/><rect x="1307.55" y="214.84" width="0.93" height="1.5" fill="#d4d4d4"/><rect x="1308.48" y="214.84" width="14.88" height="1.5" fill="#569cd6"/><rect x="1323.36" y="214.84" width="0.93" height="1.5" fill="#d4d4d4"/><rect x="1324.29" y="214.84" width="0.93" height="1.5" fill="#dcdcaa"/><rect x="1325.22" y="214.84" width="0.93" height="1.5" fill="#d4d4d4"/><rect x="1282.44" y="216.51" width="0.93" height="1.5" fill="#d4d4d4"/><rect x="1283.37" y="216.51" width="0.93" height="1.5" fill="#d4d4d4"/><rect x="1280.58" y="218.18" width="0.93" height="1.5" fill="#d4d4d4"/><rect x="1281.51" y="218.18" width="0.93" height="1.5" fill="#d4d4d4"/><rect x="1280.58" y="219.85" width="10.23" height="1.5" fill="#9cdcfe"/><rect x="1290.81" y="219.85" width="0.93" height="1.5" fill="#d4d4d4"/><rect x="1292.67" y="219.85" width="0.93" height="1.5" fill="#d4d4d4"/><rect x="1282.44" y="221.52" width="9.30" height="1.5" fill="#9cdcfe"/><rect x="1291.74" y="221.52" width="0.93" height="1.5" fill="#d4d4d4"/><rect x="1293.60" y="221.52" width="3.72" height="1.5" fill="#b5cea8"/><rect x="1297.32" y="221.52" width="0.93" height="1.5" fill="#d4d4d4"/><rect x="1282.44" y="223.19" width="5.58" height="1.5" fill="#9cdcfe"/><rect x="1288.02" y="223.19" width="0.93" height="1.5" fill="#d4d4d4"/><rect x="1289.88" y="223.19" width="0.93" height="1.5" fill="#d4d4d4"/><rect x="1284.30" y="224.86" width="12.09" height="1.5" fill="#9cdcfe"/><rect x="1296.39" y="224.86" width="0.93" height="1.5" fill="#d4d4d4"/><rect x="1298.25" y="224.86" width="4.65" height="1.5" fill="#ce9178"/><rect x="1302.90" y="224.86" width="0.93" height="1.5" fill="#d4d4d4"/><rect x="1284.30" y="226.53" width="1.86" height="1.5" fill="#6a9955"/><rect x="1287.09" y="226.53" width="13.95" height="1.5" fill="#6a9955"/><rect x="1301.97" y="226.53" width="7.44" height="1.5" fill="#6a9955"/><rect x="1284.30" y="228.20" width="10.23" height="1.5" fill="#9cdcfe"/><rect x="1294.53" y="228.20" width="0.93" height="1.5" fill="#d4d4d4"/><rect x="1296.39" y="228.20" width="8.37" height="1.5" fill="#ce9178"/><rect x="1304.76" y="228.20" width="0.93" height="1.5" fill="#d4d4d4"/><rect x="1284.30" y="229.87" width="6.51" height="1.5" fill="#9cdcfe"/><rect x="1290.81" y="229.87" width="0.93" height="1.5" fill="#d4d4d4"/><rect x="1292.67" y="229.87" width="0.93" height="1.5" fill="#d4d4d4"/><rect x="1286.16" y="231.54" width="1.86" height="1.5" fill="#6a9955"/><rect x="1288.95" y="231.54" width="0.93" height="1.5" fill="#6a9955"/><rect x="1290.81" y="231.54" width="34.41" height="1.5" fill="#6a9955"/><rect x="1326.15" y="231.54" width="3.72" height="1.5" fill="#6a9955"/><rect x="1330.80" y="231.54" width="19.53" height="1.5" fill="#6a9955"/><rect x="1351.26" y="231.54" width="3.72" height="1.5" fill="#6a9955"/><rect x="1355.91" y="231.54" width="23.25" height="1.5" fill="#6a9955"/><rect x="1380.09" y="231.54" width="2.79" height="1.5" fill="#6a9955"/><rect x="1286.16" y="233.21" width="0.93" height="1.5" fill="#d4d4d4"/><rect x="1287.09" y="233.21" width="0.93" height="1.5" fill="#dcdcaa"/><rect x="1288.02" y="233.21" width="5.58" height="1.5" fill="#dcdcaa"/><rect x="1293.60" y="233.21" width="0.93" height="1.5" fill="#d4d4d4"/><rect x="1294.53" y="233.21" width="9.30" height="1.5" fill="#4ec9b0"/><rect x="1303.83" y="233.21" width="0.93" height="1.5" fill="#d4d4d4"/><rect x="1304.76" y="233.21" width="13.95" height="1.5" fill="#4ec9b0"/><rect x="1318.71" y="233.21" width="0.93" height="1.5" fill="#d4d4d4"/><rect x="1319.64" y="233.21" width="0.93" height="1.5" fill="#d4d4d4"/><rect x="1321.50" y="233.21" width="8.37" height="1.5" fill="#569cd6"/><rect x="1329.87" y="233.21" width="0.93" height="1.5" fill="#d4d4d4"/><rect x="1330.80" y="233.21" width="18.60" height="1.5" fill="#569cd6"/><rect x="1349.40" y="233.21" width="0.93" height="1.5" fill="#d4d4d4"/><rect x="1350.33" y="233.21" width="0.93" height="1.5" fill="#d4d4d4"/><rect x="1352.19" y="233.21" width="23.25" height="1.5" fill="#ce9178"/><rect x="1375.44" y="233.21" width="0.93" height="1.5" fill="#d4d4d4"/><rect x="1377.30" y="233.21" width="5.70" height="1.5" fill="#569cd6"/><rect x="1284.30" y="234.88" width="0.93" height="1.5" fill="#d4d4d4"/><rect x="1282.44" y="236.55" width="0.93" height="1.5" fill="#d4d4d4"/><rect x="1283.37" y="236.55" width="0.93" height="1.5" fill="#d4d4d4"/><rect x="1282.44" y="238.22" width="19.53" height="1.5" fill="#9cdcfe"/><rect x="1301.97" y="238.22" width="0.93" height="1.5" fill="#d4d4d4"/><rect x="1303.83" y="238.22" width="0.93" height="1.5" fill="#d4d4d4"/><rect x="1304.76" y="238.22" width="0.93" height="1.5" fill="#dcdcaa"/><rect x="1305.69" y="238.22" width="5.58" height="1.5" fill="#dcdcaa"/><rect x="1311.27" y="238.22" width="0.93" height="1.5" fill="#d4d4d4"/><rect x="1312.20" y="238.22" width="2.79" height="1.5" fill="#ce9178"/><rect x="1314.99" y="238.22" width="0.93" height="1.5" fill="#d4d4d4"/><rect x="1316.85" y="238.22" width="2.79" height="1.5" fill="#ce9178"/><rect x="1319.64" y="238.22" width="0.93" height="1.5" fill="#d4d4d4"/><rect x="1320.57" y="238.22" width="0.93" height="1.5" fill="#dcdcaa"/><rect x="1321.50" y="238.22" width="0.93" height="1.5" fill="#d4d4d4"/><rect x="1322.43" y="238.22" width="0.93" height="1.5" fill="#d4d4d4"/><rect x="1282.44" y="239.89" width="15.81" height="1.5" fill="#9cdcfe"/><rect x="1298.25" y="239.89" width="0.93" height="1.5" fill="#d4d4d4"/><rect x="1300.11" y="239.89" width="0.93" height="1.5" fill="#d4d4d4"/><rect x="1301.04" y="239.89" width="0.93" height="1.5" fill="#dcdcaa"/><rect x="1301.97" y="239.89" width="8.37" height="1.5" fill="#569cd6"/><rect x="1310.34" y="239.89" width="0.93" height="1.5" fill="#d4d4d4"/><rect x="1311.27" y="239.89" width="2.79" height="1.5" fill="#569cd6"/><rect x="1314.06" y="239.89" width="0.93" height="1.5" fill="#d4d4d4"/><rect x="1314.99" y="239.89" width="0.93" height="1.5" fill="#dcdcaa"/><rect x="1315.92" y="239.89" width="0.93" height="1.5" fill="#d4d4d4"/><rect x="1280.58" y="241.56" width="0.93" height="1.5" fill="#d4d4d4"/><rect x="1282.44" y="243.23" width="0.93" height="1.5" fill="#d4d4d4"/><rect x="1280.58" y="244.90" width="0.93" height="1.5" fill="#d4d4d4"/><rect x="1278.72" y="246.57" width="0.93" height="1.5" fill="#d4d4d4"/><rect x="1277.79" y="248.24" width="0.93" height="1.5" fill="#d4d4d4"/><rect x="1276.86" y="249.91" width="0.93" height="1.5" fill="#d4d4d4"/><rect x="1277.79" y="249.91" width="0.93" height="1.5" fill="#d4d4d4"/><rect x="1278.72" y="253.25" width="0.93" height="1.5" fill="#d4d4d4"/><rect x="1280.58" y="254.92" width="11.16" height="1.5" fill="#9cdcfe"/><rect x="1291.74" y="254.92" width="0.93" height="1.5" fill="#d4d4d4"/><rect x="1293.60" y="254.92" width="11.16" height="1.5" fill="#ce9178"/><rect x="1304.76" y="254.92" width="0.93" height="1.5" fill="#d4d4d4"/><rect x="1280.58" y="256.59" width="5.58" height="1.5" fill="#9cdcfe"/><rect x="1286.16" y="256.59" width="0.93" height="1.5" fill="#d4d4d4"/><rect x="1288.02" y="256.59" width="34.41" height="1.5" fill="#ce9178"/><rect x="1322.43" y="256.59" width="0.93" height="1.5" fill="#d4d4d4"/><rect x="1280.58" y="258.26" width="5.58" height="1.5" fill="#9cdcfe"/><rect x="1286.16" y="258.26" width="0.93" height="1.5" fill="#d4d4d4"/><rect x="1288.02" y="258.26" width="0.93" height="1.5" fill="#d4d4d4"/><rect x="1288.95" y="258.26" width="0.93" height="1.5" fill="#dcdcaa"/><rect x="1289.88" y="258.26" width="8.37" height="1.5" fill="#569cd6"/><rect x="1298.25" y="258.26" width="0.93" height="1.5" fill="#d4d4d4"/><rect x="1299.18" y="258.26" width="8.37" height="1.5" fill="#569cd6"/><rect x="1307.55" y="258.26" width="0.93" height="1.5" fill="#d4d4d4"/><rect x="1308.48" y="258.26" width="0.93" height="1.5" fill="#dcdcaa"/><rect x="1309.41" y="258.26" width="0.93" height="1.5" fill="#d4d4d4"/><rect x="1310.34" y="258.26" width="0.93" height="1.5" fill="#d4d4d4"/><rect x="1280.58" y="259.93" width="9.30" height="1.5" fill="#9cdcfe"/><rect x="1289.88" y="259.93" width="0.93" height="1.5" fill="#d4d4d4"/><rect x="1291.74" y="259.93" width="0.93" height="1.5" fill="#d4d4d4"/><rect x="1292.67" y="259.93" width="0.93" height="1.5" fill="#dcdcaa"/><rect x="1293.60" y="259.93" width="9.30" height="1.5" fill="#4ec9b0"/><rect x="1302.90" y="259.93" width="0.93" height="1.5" fill="#d4d4d4"/><rect x="1303.83" y="259.93" width="9.30" height="1.5" fill="#4ec9b0"/><rect x="1313.13" y="259.93" width="0.93" height="1.5" fill="#d4d4d4"/><rect x="1314.06" y="259.93" width="0.93" height="1.5" fill="#dcdcaa"/><rect x="1314.99" y="259.93" width="0.93" height="1.5" fill="#d4d4d4"/><rect x="1315.92" y="259.93" width="0.93" height="1.5" fill="#d4d4d4"/><rect x="1280.58" y="261.60" width="10.23" height="1.5" fill="#9cdcfe"/><rect x="1290.81" y="261.60" width="0.93" height="1.5" fill="#d4d4d4"/><rect x="1292.67" y="261.60" width="0.93" height="1.5" fill="#d4d4d4"/><rect x="1282.44" y="263.27" width="0.93" height="1.5" fill="#d4d4d4"/><rect x="1283.37" y="263.27" width="0.93" height="1.5" fill="#dcdcaa"/><rect x="1284.30" y="263.27" width="8.37" height="1.5" fill="#569cd6"/><rect x="1292.67" y="263.27" width="0.93" height="1.5" fill="#d4d4d4"/><rect x="1293.60" y="263.27" width="19.53" height="1.5" fill="#569cd6"/><rect x="1313.13" y="263.27" width="0.93" height="1.5" fill="#d4d4d4"/><rect x="1314.06" y="263.27" width="0.93" height="1.5" fill="#dcdcaa"/><rect x="1314.99" y="263.27" width="0.93" height="1.5" fill="#d4d4d4"/><rect x="1315.92" y="263.27" width="0.93" height="1.5" fill="#d4d4d4"/><rect x="1282.44" y="264.94" width="0.93" height="1.5" fill="#d4d4d4"/><rect x="1283.37" y="264.94" width="0.93" height="1.5" fill="#dcdcaa"/><rect x="1284.30" y="264.94" width="8.37" height="1.5" fill="#569cd6"/><rect x="1292.67" y="264.94" width="0.93" height="1.5" fill="#d4d4d4"/><rect x="1293.60" y="264.94" width="5.58" height="1.5" fill="#569cd6"/><rect x="1299.18" y="264.94" width="0.93" height="1.5" fill="#d4d4d4"/><rect x="1300.11" y="264.94" width="0.93" height="1.5" fill="#dcdcaa"/><rect x="1301.04" y="264.94" width="0.93" height="1.5" fill="#d4d4d4"/><rect x="1280.58" y="266.61" width="0.93" height="1.5" fill="#d4d4d4"/><rect x="1281.51" y="266.61" width="0.93" height="1.5" fill="#d4d4d4"/><rect x="1280.58" y="268.28" width="11.16" height="1.5" fill="#9cdcfe"/><rect x="1291.74" y="268.28" width="0.93" height="1.5" fill="#d4d4d4"/><rect x="1293.60" y="268.28" width="0.93" height="1.5" fill="#d4d4d4"/><rect x="1282.44" y="269.95" width="16.74" height="1.5" fill="#9cdcfe"/><rect x="1299.18" y="269.95" width="0.93" height="1.5" fill="#d4d4d4"/><rect x="1301.04" y="269.95" width="0.93" height="1.5" fill="#d4d4d4"/><rect x="1301.97" y="269.95" width="0.93" height="1.5" fill="#d4d4d4"/><rect x="1284.30" y="271.62" width="5.58" height="1.5" fill="#9cdcfe"/><rect x="1289.88" y="271.62" width="0.93" height="1.5" fill="#d4d4d4"/><rect x="1291.74" y="271.62" width="0.93" height="1.5" fill="#d4d4d4"/><rect x="1292.67" y="271.62" width="0.93" height="1.5" fill="#dcdcaa"/><rect x="1293.60" y="271.62" width="9.30" height="1.5" fill="#4ec9b0"/><rect x="1302.90" y="271.62" width="0.93" height="1.5" fill="#d4d4d4"/><rect x="1303.83" y="271.62" width="9.30" height="1.5" fill="#4ec9b0"/><rect x="1313.13" y="271.62" width="0.93" height="1.5" fill="#d4d4d4"/><rect x="1314.06" y="271.62" width="0.93" height="1.5" fill="#dcdcaa"/><rect x="1314.99" y="271.62" width="0.93" height="1.5" fill="#d4d4d4"/><rect x="1282.44" y="273.29" width="0.93" height="1.5" fill="#d4d4d4"/><rect x="1283.37" y="273.29" width="0.93" height="1.5" fill="#d4d4d4"/><rect x="1284.30" y="273.29" width="0.93" height="1.5" fill="#d4d4d4"/><rect x="1282.44" y="274.96" width="10.23" height="1.5" fill="#9cdcfe"/><rect x="1292.67" y="274.96" width="0.93" height="1.5" fill="#d4d4d4"/><rect x="1294.53" y="274.96" width="0.93" height="1.5" fill="#d4d4d4"/><rect x="1284.30" y="276.63" width="10.23" height="1.5" fill="#9cdcfe"/><rect x="1294.53" y="276.63" width="0.93" height="1.5" fill="#d4d4d4"/><rect x="1296.39" y="276.63" width="0.93" height="1.5" fill="#d4d4d4"/><rect x="1297.32" y="276.63" width="0.93" height="1.5" fill="#dcdcaa"/><rect x="1298.25" y="276.63" width="8.37" height="1.5" fill="#569cd6"/><rect x="1306.62" y="276.63" width="0.93" height="1.5" fill="#d4d4d4"/><rect x="1307.55" y="276.63" width="2.79" height="1.5" fill="#569cd6"/><rect x="1310.34" y="276.63" width="0.93" height="1.5" fill="#d4d4d4"/><rect x="1311.27" y="276.63" width="0.93" height="1.5" fill="#dcdcaa"/><rect x="1312.20" y="276.63" width="0.93" height="1.5" fill="#d4d4d4"/><rect x="1313.13" y="276.63" width="0.93" height="1.5" fill="#d4d4d4"/><rect x="1284.30" y="278.30" width="15.81" height="1.5" fill="#9cdcfe"/><rect x="1300.11" y="278.30" width="0.93" height="1.5" fill="#d4d4d4"/><rect x="1301.97" y="278.30" width="0.93" height="1.5" fill="#d4d4d4"/><rect x="1302.90" y="278.30" width="0.93" height="1.5" fill="#dcdcaa"/><rect x="1303.83" y="278.30" width="9.30" height="1.5" fill="#4ec9b0"/><rect x="1313.13" y="278.30" width="0.93" height="1.5" fill="#d4d4d4"/><rect x="1314.06" y="278.30" width="19.53" height="1.5" fill="#4ec9b0"/><rect x="1333.59" y="278.30" width="0.93" height="1.5" fill="#d4d4d4"/><rect x="1334.52" y="278.30" width="0.93" height="1.5" fill="#dcdcaa"/><rect x="1335.45" y="278.30" width="0.93" height="1.5" fill="#d4d4d4"/><rect x="1336.38" y="278.30" width="0.93" height="1.5" fill="#d4d4d4"/><rect x="1284.30" y="279.97" width="7.44" height="1.5" fill="#9cdcfe"/><rect x="1291.74" y="279.97" width="0.93" height="1.5" fill="#d4d4d4"/><rect x="1293.60" y="279.97" width="0.93" height="1.5" fill="#d4d4d4"/><rect x="1286.16" y="281.64" width="3.72" height="1.5" fill="#9cdcfe"/><rect x="1289.88" y="281.64" width="0.93" height="1.5" fill="#d4d4d4"/><rect x="1291.74" y="281.64" width="8.37" height="1.5" fill="#ce9178"/><rect x="1300.11" y="281.64" width="0.93" height="1.5" fill="#d4d4d4"/><rect x="1286.16" y="283.31" width="4.65" height="1.5" fill="#9cdcfe"/><rect x="1290.81" y="283.31" width="0.93" height="1.5" fill="#d4d4d4"/><rect x="1292.67" y="283.31" width="7.44" height="1.5" fill="#ce9178"/><rect x="1300.11" y="283.31" width="0.93" height="1.5" fill="#d4d4d4"/><rect x="1284.30" y="284.98" width="4.65" height="1.5" fill="#9cdcfe"/><rect x="1288.95" y="284.98" width="0.93" height="1.5" fill="#d4d4d4"/><rect x="1290.81" y="284.98" width="7.44" height="1.5" fill="#ce9178"/><rect x="1298.25" y="284.98" width="0.93" height="1.5" fill="#d4d4d4"/><rect x="1284.30" y="286.65" width="4.65" height="1.5" fill="#9cdcfe"/><rect x="1288.95" y="286.65" width="0.93" height="1.5" fill="#d4d4d4"/><rect x="1290.81" y="286.65" width="9.30" height="1.5" fill="#ce9178"/><rect x="1300.11" y="286.65" width="0.93" height="1.5" fill="#d4d4d4"/><rect x="1282.44" y="288.32" width="0.93" height="1.5" fill="#d4d4d4"/><rect x="1280.58" y="289.99" width="15.81" height="1.5" fill="#9cdcfe"/><rect x="1296.39" y="289.99" width="0.93" height="1.5" fill="#d4d4d4"/><rect x="1298.25" y="289.99" width="0.93" height="1.5" fill="#d4d4d4"/><rect x="1282.44" y="291.66" width="7.44" height="1.5" fill="#9cdcfe"/><rect x="1289.88" y="291.66" width="0.93" height="1.5" fill="#d4d4d4"/><rect x="1291.74" y="291.66" width="12.09" height="1.5" fill="#ce9178"/><rect x="1303.83" y="291.66" width="0.93" height="1.5" fill="#d4d4d4"/><rect x="1282.44" y="293.33" width="5.58" height="1.5" fill="#9cdcfe"/><rect x="1288.02" y="293.33" width="0.93" height="1.5" fill="#d4d4d4"/><rect x="1289.88" y="293.33" width="0.93" height="1.5" fill="#d4d4d4"/><rect x="1290.81" y="293.33" width="0.93" height="1.5" fill="#dcdcaa"/><rect x="1291.74" y="293.33" width="8.37" height="1.5" fill="#569cd6"/><rect x="1300.11" y="293.33" width="0.93" height="1.5" fill="#d4d4d4"/><rect x="1301.04" y="293.33" width="7.44" height="1.5" fill="#569cd6"/><rect x="1308.48" y="293.33" width="0.93" height="1.5" fill="#d4d4d4"/><rect x="1309.41" y="293.33" width="0.93" height="1.5" fill="#dcdcaa"/><rect x="1310.34" y="293.33" width="0.93" height="1.5" fill="#d4d4d4"/><rect x="1311.27" y="293.33" width="0.93" height="1.5" fill="#d4d4d4"/><rect x="1282.44" y="295.00" width="2.79" height="1.5" fill="#9cdcfe"/><rect x="1285.23" y="295.00" width="0.93" height="1.5" fill="#d4d4d4"/><rect x="1287.09" y="295.00" width="0.93" height="1.5" fill="#b5cea8"/><rect x="1288.02" y="295.00" width="0.93" height="1.5" fill="#d4d4d4"/><rect x="1282.44" y="296.67" width="9.30" height="1.5" fill="#9cdcfe"/><rect x="1291.74" y="296.67" width="0.93" height="1.5" fill="#d4d4d4"/><rect x="1293.60" y="296.67" width="0.93" height="1.5" fill="#d4d4d4"/><rect x="1294.53" y="296.67" width="0.93" height="1.5" fill="#dcdcaa"/><rect x="1295.46" y="296.67" width="9.30" height="1.5" fill="#4ec9b0"/><rect x="1304.76" y="296.67" width="0.93" height="1.5" fill="#d4d4d4"/><rect x="1305.69" y="296.67" width="9.30" height="1.5" fill="#4ec9b0"/><rect x="1314.99" y="296.67" width="0.93" height="1.5" fill="#d4d4d4"/><rect x="1315.92" y="296.67" width="0.93" height="1.5" fill="#dcdcaa"/><rect x="1316.85" y="296.67" width="0.93" height="1.5" fill="#d4d4d4"/><rect x="1317.78" y="296.67" width="0.93" height="1.5" fill="#d4d4d4"/><rect x="1282.44" y="298.34" width="5.58" height="1.5" fill="#9cdcfe"/><rect x="1288.02" y="298.34" width="0.93" height="1.5" fill="#d4d4d4"/><rect x="1289.88" y="298.34" width="8.37" height="1.5" fill="#ce9178"/><rect x="1298.25" y="298.34" width="0.93" height="1.5" fill="#d4d4d4"/><rect x="1280.58" y="300.01" width="0.93" height="1.5" fill="#d4d4d4"/><rect x="1281.51" y="300.01" width="0.93" height="1.5" fill="#d4d4d4"/><rect x="1280.58" y="301.68" width="0.93" height="1.5" fill="#d4d4d4"/><rect x="1280.58" y="303.35" width="0.93" height="1.5" fill="#d4d4d4"/><rect x="1281.51" y="303.35" width="0.93" height="1.5" fill="#d4d4d4"/><rect x="1280.58" y="305.02" width="13.02" height="1.5" fill="#9cdcfe"/><rect x="1293.60" y="305.02" width="0.93" height="1.5" fill="#d4d4d4"/><rect x="1295.46" y="305.02" width="8.37" height="1.5" fill="#ce9178"/><rect x="1303.83" y="305.02" width="0.93" height="1.5" fill="#d4d4d4"/><rect x="1305.69" y="305.02" width="1.86" height="1.5" fill="#6a9955"/><rect x="1308.48" y="305.02" width="3.72" height="1.5" fill="#6a9955"/><rect x="1313.13" y="305.02" width="5.58" height="1.5" fill="#6a9955"/><rect x="1319.64" y="305.02" width="8.37" height="1.5" fill="#6a9955"/><rect x="1328.94" y="305.02" width="6.51" height="1.5" fill="#6a9955"/><rect x="1280.58" y="306.69" width="0.93" height="1.5" fill="#d4d4d4"/><rect x="1281.51" y="306.69" width="0.93" height="1.5" fill="#d4d4d4"/><rect x="1280.58" y="308.36" width="14.88" height="1.5" fill="#9cdcfe"/><rect x="1295.46" y="308.36" width="0.93" height="1.5" fill="#d4d4d4"/><rect x="1297.32" y="308.36" width="0.93" height="1.5" fill="#d4d4d4"/><rect x="1282.44" y="310.03" width="14.88" height="1.5" fill="#9cdcfe"/><rect x="1297.32" y="310.03" width="0.93" height="1.5" fill="#d4d4d4"/><rect x="1299.18" y="310.03" width="0.93" height="1.5" fill="#d4d4d4"/><rect x="1282.44" y="311.70" width="0.93" height="1.5" fill="#d4d4d4"/><rect x="1283.37" y="311.70" width="0.93" height="1.5" fill="#d4d4d4"/><rect x="1284.30" y="313.37" width="3.72" height="1.5" fill="#9cdcfe"/><rect x="1288.02" y="313.37" width="0.93" height="1.5" fill="#d4d4d4"/><rect x="1289.88" y="313.37" width="0.93" height="1.5" fill="#d4d4d4"/><rect x="1290.81" y="313.37" width="0.93" height="1.5" fill="#dcdcaa"/><rect x="1291.74" y="313.37" width="9.30" height="1.5" fill="#dcdcaa"/><rect x="1301.04" y="313.37" width="0.93" height="1.5" fill="#d4d4d4"/><rect x="1301.97" y="313.37" width="24.18" height="1.5" fill="#ce9178"/><rect x="1326.15" y="313.37" width="0.93" height="1.5" fill="#d4d4d4"/><rect x="1328.01" y="313.37" width="8.37" height="1.5" fill="#569cd6"/><rect x="1336.38" y="313.37" width="0.93" height="1.5" fill="#d4d4d4"/><rect x="1337.31" y="313.37" width="2.79" height="1.5" fill="#569cd6"/><rect x="1340.10" y="313.37" width="0.93" height="1.5" fill="#d4d4d4"/><rect x="1341.03" y="313.37" width="0.93" height="1.5" fill="#d4d4d4"/><rect x="1341.96" y="313.37" width="0.93" height="1.5" fill="#dcdcaa"/><rect x="1342.89" y="313.37" width="0.93" height="1.5" fill="#d4d4d4"/><rect x="1282.44" y="315.04" width="0.93" height="1.5" fill="#d4d4d4"/><rect x="1283.37" y="315.04" width="0.93" height="1.5" fill="#d4d4d4"/><rect x="1282.44" y="316.71" width="0.93" height="1.5" fill="#d4d4d4"/><rect x="1283.37" y="316.71" width="0.93" height="1.5" fill="#d4d4d4"/><rect x="1282.44" y="318.38" width="7.44" height="1.5" fill="#9cdcfe"/><rect x="1289.88" y="318.38" width="0.93" height="1.5" fill="#d4d4d4"/><rect x="1291.74" y="318.38" width="0.93" height="1.5" fill="#d4d4d4"/><rect x="1284.30" y="320.05" width="13.02" height="1.5" fill="#9cdcfe"/><rect x="1297.32" y="320.05" width="0.93" height="1.5" fill="#d4d4d4"/><rect x="1299.18" y="320.05" width="0.93" height="1.5" fill="#d4d4d4"/><rect x="1282.44" y="321.72" width="0.93" height="1.5" fill="#d4d4d4"/><rect x="1283.37" y="321.72" width="0.93" height="1.5" fill="#d4d4d4"/><rect x="1284.30" y="323.39" width="1.86" height="1.5" fill="#6a9955"/><rect x="1287.09" y="323.39" width="32.55" height="1.5" fill="#6a9955"/><rect x="1320.57" y="323.39" width="13.02" height="1.5" fill="#6a9955"/><rect x="1334.52" y="323.39" width="10.23" height="1.5" fill="#6a9955"/><rect x="1345.68" y="323.39" width="2.79" height="1.5" fill="#6a9955"/><rect x="1349.40" y="323.39" width="0.93" height="1.5" fill="#6a9955"/><rect x="1351.26" y="323.39" width="0.93" height="1.5" fill="#6a9955"/><rect x="1353.12" y="323.39" width="4.65" height="1.5" fill="#6a9955"/><rect x="1358.70" y="323.39" width="1.86" height="1.5" fill="#6a9955"/><rect x="1361.49" y="323.39" width="2.79" height="1.5" fill="#6a9955"/><rect x="1282.44" y="325.06" width="0.93" height="1.5" fill="#d4d4d4"/><rect x="1283.37" y="325.06" width="0.93" height="1.5" fill="#d4d4d4"/><rect x="1284.30" y="326.73" width="4.65" height="1.5" fill="#9cdcfe"/><rect x="1288.95" y="326.73" width="0.93" height="1.5" fill="#d4d4d4"/><rect x="1290.81" y="326.73" width="0.93" height="1.5" fill="#d4d4d4"/><rect x="1291.74" y="326.73" width="0.93" height="1.5" fill="#dcdcaa"/><rect x="1292.67" y="326.73" width="5.58" height="1.5" fill="#dcdcaa"/><rect x="1298.25" y="326.73" width="0.93" height="1.5" fill="#d4d4d4"/><rect x="1299.18" y="326.73" width="9.30" height="1.5" fill="#4ec9b0"/><rect x="1308.48" y="326.73" width="0.93" height="1.5" fill="#d4d4d4"/><rect x="1309.41" y="326.73" width="2.79" height="1.5" fill="#4ec9b0"/><rect x="1312.20" y="326.73" width="0.93" height="1.5" fill="#d4d4d4"/><rect x="1313.13" y="326.73" width="0.93" height="1.5" fill="#d4d4d4"/><rect x="1314.99" y="326.73" width="32.55" height="1.5" fill="#ce9178"/><rect x="1347.54" y="326.73" width="0.93" height="1.5" fill="#d4d4d4"/><rect x="1349.40" y="326.73" width="8.37" height="1.5" fill="#569cd6"/><rect x="1357.77" y="326.73" width="0.93" height="1.5" fill="#d4d4d4"/><rect x="1358.70" y="326.73" width="18.60" height="1.5" fill="#569cd6"/><rect x="1377.30" y="326.73" width="0.93" height="1.5" fill="#d4d4d4"/><rect x="1378.23" y="326.73" width="0.93" height="1.5" fill="#d4d4d4"/><rect x="1379.16" y="326.73" width="0.93" height="1.5" fill="#dcdcaa"/><rect x="1380.09" y="326.73" width="0.93" height="1.5" fill="#d4d4d4"/><rect x="1284.30" y="328.40" width="0.93" height="1.5" fill="#d4d4d4"/><rect x="1282.44" y="330.07" width="0.93" height="1.5" fill="#d4d4d4"/><rect x="1280.58" y="331.74" width="0.93" height="1.5" fill="#d4d4d4"/><rect x="1278.72" y="333.41" width="0.93" height="1.5" fill="#d4d4d4"/><rect x="1276.86" y="335.08" width="0.93" height="1.5" fill="#d4d4d4"/><rect x="1277.79" y="335.08" width="0.93" height="1.5" fill="#d4d4d4"/><rect x="1276.86" y="336.75" width="8.37" height="1.5" fill="#9cdcfe"/><rect x="1285.23" y="336.75" width="0.93" height="1.5" fill="#d4d4d4"/><rect x="1287.09" y="336.75" width="0.93" height="1.5" fill="#d4d4d4"/><rect x="1278.72" y="338.42" width="9.30" height="1.5" fill="#9cdcfe"/><rect x="1288.02" y="338.42" width="0.93" height="1.5" fill="#d4d4d4"/><rect x="1289.88" y="338.42" width="0.93" height="1.5" fill="#d4d4d4"/><rect x="1280.58" y="340.09" width="5.58" height="1.5" fill="#9cdcfe"/><rect x="1286.16" y="340.09" width="0.93" height="1.5" fill="#d4d4d4"/><rect x="1288.02" y="340.09" width="7.44" height="1.5" fill="#ce9178"/><rect x="1295.46" y="340.09" width="0.93" height="1.5" fill="#d4d4d4"/><rect x="1278.72" y="341.76" width="1.86" height="1.5" fill="#6a9955"/><rect x="1281.51" y="341.76" width="5.58" height="1.5" fill="#6a9955"/><rect x="1288.02" y="341.76" width="59.52" height="1.5" fill="#6a9955"/><rect x="1348.47" y="341.76" width="1.86" height="1.5" fill="#6a9955"/><rect x="1351.26" y="341.76" width="1.86" height="1.5" fill="#6a9955"/><rect x="1354.05" y="341.76" width="6.51" height="1.5" fill="#6a9955"/><rect x="1278.72" y="343.43" width="6.51" height="1.5" fill="#9cdcfe"/><rect x="1285.23" y="343.43" width="0.93" height="1.5" fill="#d4d4d4"/><rect x="1287.09" y="343.43" width="0.93" height="1.5" fill="#d4d4d4"/><rect x="1288.02" y="343.43" width="0.93" height="1.5" fill="#dcdcaa"/><rect x="1288.95" y="343.43" width="9.30" height="1.5" fill="#4ec9b0"/><rect x="1298.25" y="343.43" width="0.93" height="1.5" fill="#d4d4d4"/><rect x="1299.18" y="343.43" width="14.88" height="1.5" fill="#4ec9b0"/><rect x="1314.06" y="343.43" width="0.93" height="1.5" fill="#d4d4d4"/><rect x="1314.99" y="343.43" width="0.93" height="1.5" fill="#d4d4d4"/><rect x="1316.85" y="343.43" width="4.65" height="1.5" fill="#ce9178"/><rect x="1321.50" y="343.43" width="0.93" height="1.5" fill="#dcdcaa"/><rect x="1322.43" y="343.43" width="0.93" height="1.5" fill="#d4d4d4"/><rect x="1323.36" y="343.43" width="0.93" height="1.5" fill="#d4d4d4"/><rect x="1278.72" y="345.10" width="0.93" height="1.5" fill="#d4d4d4"/><rect x="1279.65" y="345.10" width="0.93" height="1.5" fill="#d4d4d4"/><rect x="1278.72" y="346.77" width="2.79" height="1.5" fill="#9cdcfe"/><rect x="1281.51" y="346.77" width="0.93" height="1.5" fill="#d4d4d4"/><rect x="1283.37" y="346.77" width="0.93" height="1.5" fill="#d4d4d4"/><rect x="1284.30" y="346.77" width="0.93" height="1.5" fill="#dcdcaa"/><rect x="1285.23" y="346.77" width="0.93" height="1.5" fill="#dcdcaa"/><rect x="1286.16" y="346.77" width="0.93" height="1.5" fill="#dcdcaa"/><rect x="1287.09" y="346.77" width="0.93" height="1.5" fill="#d4d4d4"/><rect x="1288.02" y="346.77" width="0.93" height="1.5" fill="#d4d4d4"/><rect x="1278.72" y="348.44" width="11.16" height="1.5" fill="#9cdcfe"/><rect x="1289.88" y="348.44" width="0.93" height="1.5" fill="#d4d4d4"/><rect x="1291.74" y="348.44" width="0.93" height="1.5" fill="#d4d4d4"/><rect x="1292.67" y="348.44" width="0.93" height="1.5" fill="#dcdcaa"/><rect x="1293.60" y="348.44" width="9.30" height="1.5" fill="#4ec9b0"/><rect x="1302.90" y="348.44" width="0.93" height="1.5" fill="#d4d4d4"/><rect x="1303.83" y="348.44" width="2.79" height="1.5" fill="#4ec9b0"/><rect x="1306.62" y="348.44" width="0.93" height="1.5" fill="#d4d4d4"/><rect x="1307.55" y="348.44" width="0.93" height="1.5" fill="#d4d4d4"/><rect x="1309.41" y="348.44" width="2.79" height="1.5" fill="#ce9178"/><rect x="1312.20" y="348.44" width="0.93" height="1.5" fill="#d4d4d4"/><rect x="1314.06" y="348.44" width="8.37" height="1.5" fill="#dcdcaa"/><rect x="1322.43" y="348.44" width="0.93" height="1.5" fill="#d4d4d4"/><rect x="1323.36" y="348.44" width="8.37" height="1.5" fill="#569cd6"/><rect x="1331.73" y="348.44" width="0.93" height="1.5" fill="#d4d4d4"/><rect x="1332.66" y="348.44" width="2.79" height="1.5" fill="#569cd6"/><rect x="1335.45" y="348.44" width="0.93" height="1.5" fill="#d4d4d4"/><rect x="1336.38" y="348.44" width="0.93" height="1.5" fill="#d4d4d4"/><rect x="1337.31" y="348.44" width="0.93" height="1.5" fill="#d4d4d4"/><rect x="1338.24" y="348.44" width="10.23" height="1.5" fill="#dcdcaa"/><rect x="1348.47" y="348.44" width="0.93" height="1.5" fill="#d4d4d4"/><rect x="1349.40" y="348.44" width="3.72" height="1.5" fill="#dcdcaa"/><rect x="1353.12" y="348.44" width="0.93" height="1.5" fill="#d4d4d4"/><rect x="1354.05" y="348.44" width="0.93" height="1.5" fill="#dcdcaa"/><rect x="1354.98" y="348.44" width="0.93" height="1.5" fill="#d4d4d4"/><rect x="1355.91" y="348.44" width="0.93" height="1.5" fill="#d4d4d4"/><rect x="1278.72" y="350.11" width="0.93" height="1.5" fill="#d4d4d4"/><rect x="1278.72" y="351.78" width="0.93" height="1.5" fill="#d4d4d4"/><rect x="1279.65" y="351.78" width="0.93" height="1.5" fill="#d4d4d4"/><rect x="1276.86" y="353.45" width="11.16" height="1.5" fill="#9cdcfe"/><rect x="1288.02" y="353.45" width="0.93" height="1.5" fill="#d4d4d4"/><rect x="1289.88" y="353.45" width="0.93" height="1.5" fill="#d4d4d4"/><rect x="1280.58" y="355.12" width="2.79" height="1.5" fill="#9cdcfe"/><rect x="1283.37" y="355.12" width="0.93" height="1.5" fill="#d4d4d4"/><rect x="1285.23" y="355.12" width="7.44" height="1.5" fill="#ce9178"/><rect x="1292.67" y="355.12" width="0.93" height="1.5" fill="#d4d4d4"/><rect x="1278.72" y="356.79" width="2.79" height="1.5" fill="#9cdcfe"/><rect x="1281.51" y="356.79" width="0.93" height="1.5" fill="#d4d4d4"/><rect x="1283.37" y="356.79" width="0.93" height="1.5" fill="#d4d4d4"/><rect x="1284.30" y="356.79" width="0.93" height="1.5" fill="#dcdcaa"/><rect x="1285.23" y="356.79" width="8.37" height="1.5" fill="#569cd6"/><rect x="1293.60" y="356.79" width="0.93" height="1.5" fill="#d4d4d4"/><rect x="1294.53" y="356.79" width="2.79" height="1.5" fill="#569cd6"/><rect x="1297.32" y="356.79" width="0.93" height="1.5" fill="#d4d4d4"/><rect x="1298.25" y="356.79" width="0.93" height="1.5" fill="#dcdcaa"/><rect x="1299.18" y="356.79" width="0.93" height="1.5" fill="#d4d4d4"/><rect x="1278.72" y="358.46" width="0.93" height="1.5" fill="#d4d4d4"/><rect x="1276.86" y="360.13" width="0.93" height="1.5" fill="#d4d4d4"/><rect x="1275.00" y="361.80" width="0.93" height="1.5" fill="#d4d4d4"/></g></svg>
<div class="abs" style="left:1384px;top:88px;width:1px;height:691px;background:#2f2f2f"></div>
<div class="abs" style="left:1384px;top:157px;width:16px;height:125px;background:#464646"></div>
<div class="abs" style="left:1384px;top:197px;width:16px;height:2px;background:#a0a0a0"></div>
<div class="abs" style="left:1395px;top:131px;width:5px;height:6px;background:#d4ac00"></div>
<div class="abs" style="left:1395px;top:138px;width:5px;height:6px;background:#d4ac00"></div>
<div class="abs" style="left:1395px;top:283px;width:5px;height:6px;background:#d4ac00"></div>
<div class="abs" style="left:1395px;top:293px;width:5px;height:6px;background:#d4ac00"></div>

<!-- STATUS BAR -->
<div id="status">
</div>
<svg class="abs" style="left:0;top:779px;z-index:4" width="1400" height="23" viewBox="0 779 1400 23">
  <g fill="none" stroke="#fff" stroke-width="1.4">
    <circle cx="18.9" cy="785.8" r="1.7"/>
    <circle cx="25.4" cy="787.6" r="1.7"/>
    <circle cx="18.9" cy="795.3" r="1.7"/>
    <path d="M18.9 787.5 V793.6" stroke-width="1.8"/>
    <path d="M25.4 789.3 Q25.4 792.4 19 793.4" stroke-width="1.6"/>
    <path d="M104.6 788 A5.3 5.3 0 0 0 95.6 789.2" stroke-width="2"/>
    <path d="M96.4 793.6 A5.3 5.3 0 0 0 105.4 792.2" stroke-width="2"/>
  </g>
  <path d="M106.6 785 V789.6 H102 Z" fill="#fff"/>
  <path d="M94.4 796 V791.4 H99 Z" fill="#fff"/>
  <path d="M135 786.8 V793" stroke="#fff" stroke-width="1.4"/>
  <path d="M132.6 791.8 H137.4 L135 795 Z" fill="#fff"/>
  <path d="M159.4 789 V795" stroke="#fff" stroke-width="1.4"/>
  <path d="M157.1 790 H161.7 L159.4 786.8 Z" fill="#fff"/>
  <circle cx="188.3" cy="790.6" r="7" fill="#fff"/>
  <path d="M185.4 787.7 L191.2 793.5 M191.2 787.7 L185.4 793.5" stroke="#007acc" stroke-width="1.5"/>
  <path d="M218.8 784.2 L225.8 796.7 L211.7 796.7 Z" fill="#fff" stroke="#fff" stroke-width="0.6" stroke-linejoin="round"/>
  <path d="M218.75 788.2 V793" stroke="#007acc" stroke-width="1.4"/>
  <rect x="218.05" y="794" width="1.4" height="1.4" fill="#007acc"/>
  <circle cx="1343.8" cy="790.6" r="7" fill="#fff"/>
  <circle cx="1341.3" cy="788" r="1" fill="#007acc"/>
  <circle cx="1346.3" cy="788" r="1" fill="#007acc"/>
  <path d="M1340 791.6 Q1343.8 795.8 1347.6 791.6" fill="none" stroke="#007acc" stroke-width="1.2"/>
  <path d="M1376 784 Q1371.6 784.2 1371.2 789.6 Q1370.9 792.4 1369 794 H1382.8 Q1380.9 792.4 1380.7 789.6 Q1380.4 784.2 1376 784 Z" fill="#fff"/>
  <path d="M1374 795 H1378 Q1377.6 796.8 1376 796.8 Q1374.4 796.8 1374 795 Z" fill="#fff"/>
</svg>

<div class="tx" id="m_file" style="left:49.00px;top:9.84px;font-size:13.5px;color:#cccccc;letter-spacing:-0.167px">File</div>
<div class="tx" id="m_edit" style="left:88.00px;top:9.84px;font-size:13.5px;color:#cccccc;letter-spacing:0.167px">Edit</div>
<div class="tx" id="m_sel" style="left:130.40px;top:9.84px;font-size:13.5px;color:#cccccc;letter-spacing:0.375px">Selection</div>
<div class="tx" id="m_view" style="left:207.20px;top:9.84px;font-size:13.5px;color:#cccccc;letter-spacing:0.333px">View</div>
<div class="tx" id="m_go" style="left:255.20px;top:9.84px;font-size:13.5px;color:#cccccc;letter-spacing:0.500px">Go</div>
<div class="tx" id="m_debug" style="left:291.80px;top:9.84px;font-size:13.5px;color:#cccccc;letter-spacing:0.875px">Debug</div>
<div class="tx" id="m_term" style="left:353.60px;top:9.84px;font-size:13.5px;color:#cccccc;letter-spacing:0.501px">Terminal</div>
<div class="tx" id="m_help" style="left:426.40px;top:9.84px;font-size:13.5px;color:#cccccc;letter-spacing:0.499px">Help</div>
<div class="tx" id="m_title" style="left:520.00px;top:9.84px;font-size:13.5px;color:#cccccc;letter-spacing:-0.053px">vm-stack.json - personal-arm-templates - Visual Studio Code</div>
<div class="tx" id="tabname" style="left:90.80px;top:42.76px;font-size:14px;color:#ffffff;letter-spacing:0.084px">vm-stack.json</div>
<div class="tx" id="bc1" style="left:72.00px;top:70.76px;font-size:14px;color:#a9a9a9;letter-spacing:0.124px">ARM-Templates</div>
<div class="tx" id="bc2" style="left:191.00px;top:70.76px;font-size:14px;color:#a9a9a9;letter-spacing:0.200px">language-service</div>
<div class="tx" id="bc3" style="left:318.00px;top:70.76px;font-size:14px;color:#a9a9a9;letter-spacing:0.499px">demoDeploy</div>
<div class="tx" id="bc4" style="left:444.20px;top:70.76px;font-size:14px;color:#a9a9a9;letter-spacing:0.126px">vm-stack.json</div>
<div class="tx" id="s_master" style="left:30.80px;top:783.92px;font-size:13px;color:#ffffff;letter-spacing:-0.000px">master*</div>
<div class="tx" id="s_sync" style="left:110.60px;top:783.92px;font-size:13px;color:#ffffff;letter-spacing:-0.300px">198</div>
<div class="tx" id="s_sync2" style="left:142.00px;top:783.92px;font-size:13px;color:#ffffff;letter-spacing:-0.800px">91</div>
<div class="tx" id="s_err" style="left:199.80px;top:783.92px;font-size:13px;color:#ffffff;letter-spacing:0.000px">0</div>
<div class="tx" id="s_warn" style="left:230.20px;top:783.92px;font-size:13px;color:#ffffff;letter-spacing:0.000px">4</div>
<div class="tx" id="s_ln" style="left:845.00px;top:783.92px;font-size:13px;color:#ffffff;letter-spacing:-0.167px">Ln 84, Col 62</div>
<div class="tx" id="s_sp" style="left:938.80px;top:783.92px;font-size:13px;color:#ffffff;letter-spacing:-0.375px">Spaces: 2</div>
<div class="tx" id="s_utf" style="left:1011.80px;top:783.92px;font-size:13px;color:#ffffff;letter-spacing:-0.375px">UTF-8</div>
<div class="tx" id="s_crlf" style="left:1065.20px;top:783.92px;font-size:13px;color:#ffffff;letter-spacing:-0.400px;transform:scaleX(0.88);transform-origin:0 0">CRLF</div>
<div class="tx" id="s_lang" style="left:1112.40px;top:783.92px;font-size:13px;color:#ffffff;letter-spacing:0.016px">Azure Resource Manager Template</div>
</body></html>
